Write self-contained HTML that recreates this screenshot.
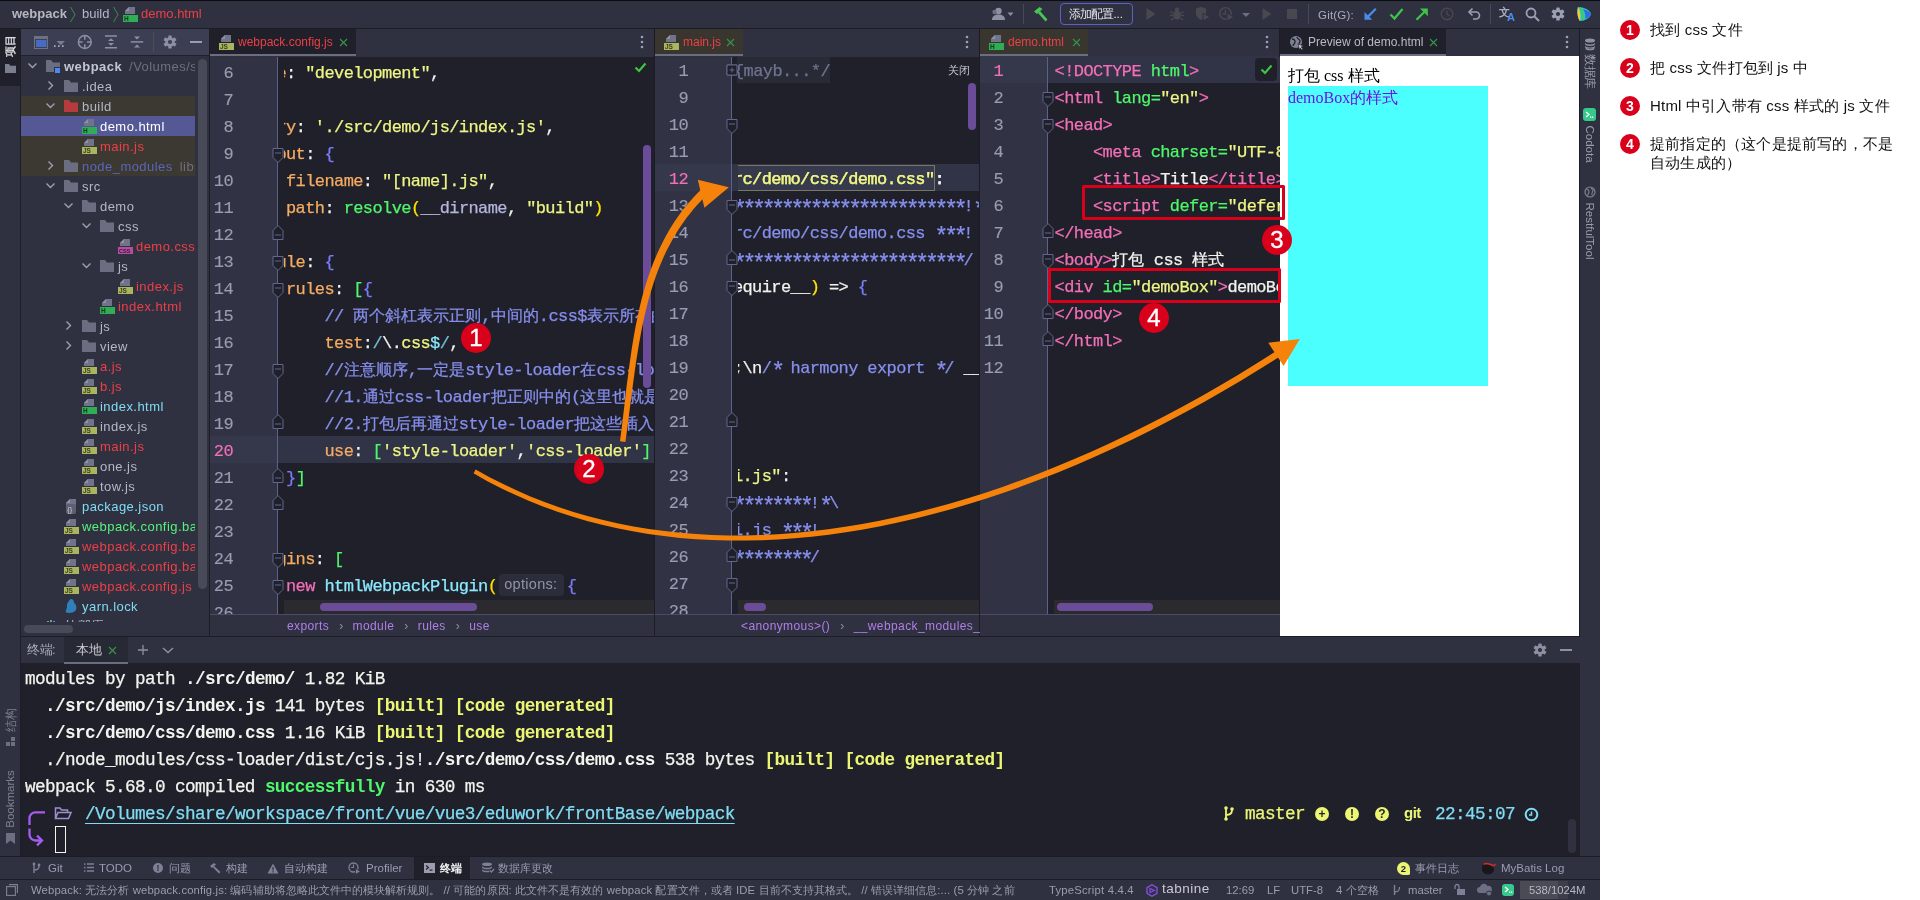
<!DOCTYPE html>
<html><head><meta charset="utf-8"><title>webpack</title>
<style>
*{box-sizing:border-box}
html,body{margin:0;padding:0}
body{width:1920px;height:900px;position:relative;overflow:hidden;background:#fff;font-family:"Liberation Sans",sans-serif;}
.a{position:absolute}
.mono{font-family:"Liberation Mono",monospace}
.code{-webkit-text-stroke:.25px currentColor;position:absolute;font-family:"Liberation Mono",monospace;font-size:17px;letter-spacing:-.6px;line-height:27px;height:27px;white-space:pre;color:#f2f2ee}
.ln{-webkit-text-stroke:.15px currentColor;position:absolute;font-family:"Liberation Mono",monospace;font-size:17px;letter-spacing:-.6px;line-height:27px;height:27px;text-align:right;color:#9a9cb1}
.tree{position:absolute;font-size:13px;letter-spacing:.45px;line-height:20px;height:20px;margin-top:1px;white-space:nowrap;color:#b4b7c7}
.ui{position:absolute;font-size:12px;line-height:16px;white-space:nowrap;color:#b4b7c7}
.term{position:absolute;font-family:"Liberation Mono",monospace;font-size:17.7px;letter-spacing:-.62px;line-height:27px;height:27px;white-space:pre;color:#f4f4ef;-webkit-text-stroke:.25px currentColor}
.clip{position:absolute;overflow:hidden}
.k{display:inline-block;line-height:0;text-align:center;white-space:nowrap;letter-spacing:0;vertical-align:baseline}
.st{font-size:23px;letter-spacing:-4.2px;position:relative;top:6.2px;line-height:0}
svg{position:absolute;overflow:visible}
</style></head><body><div id="root" style="position:absolute;left:0;top:0;width:1920px;height:900px;will-change:transform">

<div class="a" style="left:0px;top:0px;width:1600px;height:900px;background:#2f3140;"></div>
<div class="a" style="left:0px;top:0px;width:1600px;height:1px;background:#0c0c10;"></div>
<div class="a" style="left:0px;top:28px;width:1600px;height:1px;background:#1b1c24;"></div>
<div class="ui" style="left:12px;top:6px;font-size:13px;font-weight:bold;color:#b5b7be">webpack</div>
<svg class="a" style="left:69px;top:6px" width="8" height="17" viewBox="0 0 8 17"><path d="M1.5 1l4.5 7.5L1.5 16" fill="none" stroke="#3d7a4d" stroke-width="1.1"/></svg>
<div class="ui" style="left:82px;top:6px;font-size:13px;color:#b4b7c7">build</div>
<svg class="a" style="left:112px;top:6px" width="8" height="17" viewBox="0 0 8 17"><path d="M1.5 1l4.5 7.5L1.5 16" fill="none" stroke="#3d7a4d" stroke-width="1.1"/></svg>
<svg class="a" style="left:122px;top:6px" width="17" height="16" viewBox="0 0 17 16"><path d="M7 1h6v7H3V5z" fill="#70738a"/><path d="M7 1v4H3z" fill="#8f92a6"/><rect x="1" y="9" width="15" height="7" fill="#2fae55"/><text x="2" y="15.2" font-family="Liberation Sans" font-weight="bold" font-size="6.5" fill="#0c3a1a">H</text></svg>
<div class="ui" style="left:141px;top:6px;font-size:13px;color:#ee3f47">demo.html</div>
<svg class="a" style="left:990px;top:6px" width="28" height="16" viewBox="0 0 28 16"><circle cx="8.5" cy="5" r="3.2" fill="#8d90a3"/><path d="M2 14c0-4 3-5.5 6.5-5.5S15 10 15 14z" fill="#8d90a3"/><circle cx="4.5" cy="6" r="2.2" fill="#6d7083"/><path d="M17.5 6.5h6l-3 3.5z" fill="#8d90a3"/></svg>
<div class="a" style="left:1023px;top:4px;width:1px;height:20px;background:#45475a;"></div>
<svg class="a" style="left:1032px;top:5px" width="18" height="18" viewBox="0 0 18 18"><path d="M2 6.5L7.5 2l3 2-5.5 5z" fill="#47c653"/><path d="M8 6l7.5 8.5-2 2L6 8z" fill="#47c653"/></svg>
<div class="a" style="left:1060px;top:3px;width:73px;height:22px;border:1px solid #5c62c4;border-radius:4px;background:transparent"></div>
<div class="ui" style="left:1069px;top:6px;font-size:11.500px;color:#e4e4ea"><span class="k" style="width:11.1px;">添</span><span class="k" style="width:11.1px;">加</span><span class="k" style="width:11.1px;">配</span><span class="k" style="width:11.1px;">置</span>...</div>
<svg class="a" style="left:1145px;top:6px" width="12" height="16" viewBox="0 0 12 16"><path d="M1.5 2l9 6-9 6z" fill="#484950"/></svg>
<svg class="a" style="left:1169px;top:6px" width="16" height="16" viewBox="0 0 16 16"><ellipse cx="8" cy="9" rx="3.6" ry="4.6" fill="#484950"/><circle cx="8" cy="3.6" r="2.2" fill="#484950"/><path d="M1.5 5.5l3 2M14.5 5.5l-3 2M1 9.5h3.5M15 9.5h-3.5M2 14l3-2M14 14l-3-2" stroke="#484950" stroke-width="1.3"/></svg>
<svg class="a" style="left:1194px;top:6px" width="17" height="16" viewBox="0 0 17 16"><path d="M2 2.5l5-1.5 5 1.5v5c0 3-2.5 5.5-5 6.5C4.5 13 2 10.500 2 7.500z" fill="#484950"/><path d="M9 7l7 4-7 4z" fill="#484950" stroke="#2f3140" stroke-width="1"/></svg>
<svg class="a" style="left:1218px;top:6px" width="17" height="16" viewBox="0 0 17 16"><circle cx="7.5" cy="7.5" r="5.7" fill="none" stroke="#484950" stroke-width="1.6"/><path d="M7.500 4v4h-3" fill="none" stroke="#484950" stroke-width="1.4"/><path d="M9 7l7 4-7 4z" fill="#484950" stroke="#2f3140" stroke-width="1"/></svg>
<svg class="a" style="left:1241px;top:12px" width="10" height="6" viewBox="0 0 10 6"><path d="M1 1h8L5 5z" fill="#6d7083"/></svg>
<svg class="a" style="left:1261px;top:6px" width="12" height="16" viewBox="0 0 12 16"><path d="M1.5 2l9 6-9 6z" fill="#484950"/></svg>
<div class="a" style="left:1287px;top:9px;width:10px;height:10px;background:#484950;"></div>
<div class="a" style="left:1308px;top:4px;width:1px;height:20px;background:#45475a;"></div>
<div class="ui" style="left:1318px;top:7px;font-size:11.5px;color:#a9acbe;letter-spacing:.2px">Git(G):</div>
<svg class="a" style="left:1363px;top:7px" width="14" height="14" viewBox="0 0 14 14"><path d="M12.800 1.800L5 9.600" fill="none" stroke="#4a8bf0" stroke-width="2.200"/><path d="M1.500 12.800V5l7.800 7.800z" fill="#4a8bf0"/></svg>
<svg class="a" style="left:1389px;top:7px" width="15" height="14" viewBox="0 0 15 14"><path d="M1.500 7.500l4 4 8-9.500" fill="none" stroke="#3ec545" stroke-width="2.2"/></svg>
<svg class="a" style="left:1415px;top:7px" width="14" height="14" viewBox="0 0 14 14"><path d="M1.500 12.800L9.300 5" fill="none" stroke="#3ec545" stroke-width="2.200"/><path d="M12.800 1.500v7.800L5 1.500z" fill="#3ec545"/></svg>
<svg class="a" style="left:1440px;top:7px" width="14" height="14" viewBox="0 0 14 14"><circle cx="7" cy="7" r="5.800" fill="none" stroke="#484950" stroke-width="1.400"/><path d="M7 3.500V7l2.500 2" fill="none" stroke="#484950" stroke-width="1.300"/></svg>
<svg class="a" style="left:1467px;top:7px" width="14" height="14" viewBox="0 0 14 14"><path d="M2.500 5h6.500a3.500 3.500 0 0 1 0 7H6" fill="none" stroke="#9da0b3" stroke-width="1.600"/><path d="M5.500 1.500L2 5l3.500 3.500" fill="none" stroke="#9da0b3" stroke-width="1.600"/></svg>
<div class="a" style="left:1490px;top:4px;width:1px;height:20px;background:#45475a;"></div>
<div class="ui" style="left:1499px;top:4px;font-size:11px;color:#a9acbe;font-weight:bold"><span class="k" style="width:11px;">文</span></div>
<div class="ui" style="left:1507px;top:9px;font-size:11px;color:#4a8bf0;font-weight:bold">A</div>
<svg class="a" style="left:1525px;top:7px" width="15" height="15" viewBox="0 0 15 15"><circle cx="6" cy="6" r="4.500" fill="none" stroke="#9da0b3" stroke-width="1.800"/><path d="M9.500 9.500L14 14" stroke="#9da0b3" stroke-width="2"/></svg>
<svg class="a" style="left:1551px;top:7px" width="14" height="14" viewBox="-7 -7 14 14"><rect x="-1.700" y="-6.600" width="3.400" height="4" rx=".5" fill="#9da0b3" transform="rotate(0)"/><rect x="-1.700" y="-6.600" width="3.400" height="4" rx=".5" fill="#9da0b3" transform="rotate(60)"/><rect x="-1.700" y="-6.600" width="3.400" height="4" rx=".5" fill="#9da0b3" transform="rotate(120)"/><rect x="-1.700" y="-6.600" width="3.400" height="4" rx=".5" fill="#9da0b3" transform="rotate(180)"/><rect x="-1.700" y="-6.600" width="3.400" height="4" rx=".5" fill="#9da0b3" transform="rotate(240)"/><rect x="-1.700" y="-6.600" width="3.400" height="4" rx=".5" fill="#9da0b3" transform="rotate(300)"/><circle r="4.700" fill="#9da0b3"/><circle r="2.100" fill="#2f3140"/></svg>
<svg class="a" style="left:1576px;top:6px" width="16" height="16" viewBox="0 0 16 16"><path d="M2 1c6 0 12 3 13 7-1 4-6 7-11 7C1 11 1 5 2 1z" fill="#2dc5c4"/><path d="M2 1c2 3 3 7 2 14C1 11 1 5 2 1z" fill="#f7c83a"/><path d="M7 3c4 1 7 3 8 5-1 2-3 4-6 5 1-3 0-7-2-10z" fill="#2e6be6"/><path d="M4 2c3 3 4 8 3 12" fill="none" stroke="#3ecf5a" stroke-width="2"/></svg>
<div class="a" style="left:0px;top:29px;width:21px;height:57px;background:#1f2029;"></div>
<div class="ui" style="left:-7.700px;top:39px;width:36px;height:14px;font-size:11px;line-height:14px;color:#e6e6ea;transform:rotate(-90deg);text-align:center;-webkit-text-stroke:.3px #e6e6ea"><span class="k" style="width:11px;">项</span><span class="k" style="width:11px;">目</span></div>
<svg class="a" style="left:5px;top:64px" width="11" height="9" viewBox="0 0 11 9"><path d="M0 0h4l1.300 1.800H11V9H0z" fill="#7b7e8e"/></svg>
<div class="ui" style="left:-7px;top:713px;width:36px;height:14px;font-size:11.500px;line-height:14px;color:#7e8196;transform:rotate(-90deg);text-align:center"><span class="k" style="width:11.5px;">结</span><span class="k" style="width:11.5px;">构</span></div>
<svg class="a" style="left:6px;top:737px" width="10" height="10" viewBox="0 0 10 10"><rect x="5" y="0" width="4" height="4" fill="#6d7083"/><rect x="0" y="5" width="4" height="4" fill="#6d7083"/><rect x="5" y="5" width="4" height="4" fill="#6d7083"/></svg>
<div class="ui" style="left:-22px;top:792px;width:64px;height:14px;font-size:11.5px;line-height:14px;color:#7e8196;transform:rotate(-90deg);text-align:center">Bookmarks</div>
<svg class="a" style="left:6px;top:833px" width="9" height="11" viewBox="0 0 9 11"><path d="M0 0h9v11L4.500 7.500 0 11z" fill="#6d7083"/></svg>
<div class="a" style="left:20px;top:29px;width:1px;height:828px;background:#1d1e27;"></div>
<div class="a" style="left:21px;top:29px;width:188px;height:27px;background:#3c3f54;"></div>
<svg class="a" style="left:34px;top:36px" width="14" height="13" viewBox="0 0 14 13"><rect x=".5" y=".5" width="13" height="12" fill="#3c3f54" stroke="#6e7182" stroke-width="1"/><rect x="1" y="1" width="12" height="2" fill="#6e7182"/><rect x="2" y="4" width="10.500" height="7" fill="#466bc4"/></svg>
<svg class="a" style="left:53px;top:40px" width="13" height="8" viewBox="0 0 13 8"><rect x="1" y="5.300" width="1.600" height="1.600" fill="#b4b7c7"/><rect x="5" y="5.300" width="1.600" height="1.600" fill="#b4b7c7"/><rect x="9" y="5.300" width="1.600" height="1.600" fill="#b4b7c7"/><path d="M3.600 .9h8.400L7.800 5.300z" fill="#7a7d90"/></svg>
<svg class="a" style="left:77px;top:34px" width="16" height="16" viewBox="0 0 16 16"><circle cx="7.800" cy="8" r="6.400" fill="none" stroke="#8d90a3" stroke-width="1.500"/><path d="M7.800 1.500v4.300M7.800 10.200v4.300M1.300 8h4.300M10 8h4.300" stroke="#8d90a3" stroke-width="1.500"/></svg>
<svg class="a" style="left:104px;top:35px" width="14" height="14" viewBox="0 0 14 14"><path d="M1 1h12M1 12.800h12" stroke="#8d90a3" stroke-width="1.500"/><path d="M4 6L7 3.300 10 6zM4 8L7 10.700 10 8z" fill="#8d90a3"/></svg>
<svg class="a" style="left:130px;top:35px" width="14" height="14" viewBox="0 0 14 14"><path d="M.8 6.900h12.400" stroke="#8d90a3" stroke-width="1.500"/><path d="M4 1.500h6L7 4.500zM4 12.500h6L7 9.500z" fill="#8d90a3"/></svg>
<div class="a" style="left:153px;top:32px;width:1px;height:20px;background:#4f4e4b;"></div>
<svg class="a" style="left:163px;top:35px" width="14" height="14" viewBox="-7 -7 14 14"><rect x="-1.700" y="-6.600" width="3.400" height="4" rx=".5" fill="#8d90a3" transform="rotate(0)"/><rect x="-1.700" y="-6.600" width="3.400" height="4" rx=".5" fill="#8d90a3" transform="rotate(60)"/><rect x="-1.700" y="-6.600" width="3.400" height="4" rx=".5" fill="#8d90a3" transform="rotate(120)"/><rect x="-1.700" y="-6.600" width="3.400" height="4" rx=".5" fill="#8d90a3" transform="rotate(180)"/><rect x="-1.700" y="-6.600" width="3.400" height="4" rx=".5" fill="#8d90a3" transform="rotate(240)"/><rect x="-1.700" y="-6.600" width="3.400" height="4" rx=".5" fill="#8d90a3" transform="rotate(300)"/><circle r="4.700" fill="#8d90a3"/><circle r="2.100" fill="#3c3f54"/></svg>
<div class="a" style="left:190px;top:41px;width:12px;height:2px;background:#9a9db0;"></div>
<div class="a" style="left:21px;top:55px;width:188px;height:1px;background:#20212b;"></div>
<div class="a" style="left:21px;top:56px;width:188px;height:558px;background:#2f3140;"></div>
<div class="a" style="left:21px;top:96px;width:174px;height:20px;background:#3b3932;"></div>
<div class="a" style="left:21px;top:116px;width:174px;height:20px;background:#545996;"></div>
<div class="a" style="left:21px;top:136px;width:174px;height:40px;background:#3b3932;"></div>
<div class="a" style="left:198px;top:59px;width:9px;height:530px;border-radius:5px;background:#494a57"></div>
<div class="a" style="left:24px;top:625px;width:49px;height:8px;border-radius:4px;background:#494a57"></div>
<div class="clip" style="left:21px;top:56px;width:174px;height:565px">
<svg class="a" style="left:6px;top:4px" width="11" height="11" viewBox="0 0 11 11"><path d="M1.5 3.5l4 4 4-4" fill="none" stroke="#9da0b3" stroke-width="1.4"/></svg>
<svg class="a" style="left:24px;top:3px" width="16" height="14" viewBox="0 0 16 14"><path d="M1 1h5l2 2.5h7V13H1z" fill="#6b6e80"/></svg>
<div class="a" style="left:33px;top:11px;width:7px;height:7px;background:#4a8bf0;border:1px solid #2f3140"></div>
<div class="tree" style="left:43px;top:0px;color:#c2c5d4;font-weight:bold;">webpack<span style="color:#6c6f82;font-weight:normal;padding-left:7px">/Volumes/s</span></div>
<svg class="a" style="left:24px;top:24px" width="11" height="11" viewBox="0 0 11 11"><path d="M3.5 1.5l4 4-4 4" fill="none" stroke="#9da0b3" stroke-width="1.4"/></svg>
<svg class="a" style="left:42px;top:23px" width="16" height="14" viewBox="0 0 16 14"><path d="M1 1h5l2 2.5h7V13H1z" fill="#6b6e80"/></svg>
<div class="tree" style="left:61px;top:20px;color:#b4b7c7;">.idea</div>
<svg class="a" style="left:24px;top:44px" width="11" height="11" viewBox="0 0 11 11"><path d="M1.5 3.5l4 4 4-4" fill="none" stroke="#9da0b3" stroke-width="1.4"/></svg>
<svg class="a" style="left:42px;top:43px" width="16" height="14" viewBox="0 0 16 14"><path d="M1 1h5l2 2.5h7V13H1z" fill="#b53b3f"/></svg>
<div class="tree" style="left:61px;top:40px;color:#b4b7c7;">build</div>
<svg class="a" style="left:60px;top:62px" width="17" height="16" viewBox="0 0 17 16"><path d="M7 1h6v7H3V5z" fill="#70738a"/><path d="M7 1v4H3z" fill="#8f92a6"/><rect x="1" y="9" width="15" height="7" fill="#2fae55"/><text x="2" y="15.2" font-family="Liberation Sans" font-weight="bold" font-size="6.5" fill="#0c3a1a">H</text></svg>
<div class="tree" style="left:79px;top:60px;color:#ffffff;">demo.html</div>
<svg class="a" style="left:60px;top:82px" width="17" height="16" viewBox="0 0 17 16"><path d="M7 1h6v7H3V5z" fill="#70738a"/><path d="M7 1v4H3z" fill="#8f92a6"/><rect x="1" y="9" width="15" height="7" fill="#aab55f"/><text x="2" y="15.2" font-family="Liberation Sans" font-weight="bold" font-size="6.5" fill="#3a3e1c">JS</text></svg>
<div class="tree" style="left:79px;top:80px;color:#ee3f47;">main.js</div>
<svg class="a" style="left:24px;top:104px" width="11" height="11" viewBox="0 0 11 11"><path d="M3.5 1.5l4 4-4 4" fill="none" stroke="#9da0b3" stroke-width="1.4"/></svg>
<svg class="a" style="left:42px;top:103px" width="16" height="14" viewBox="0 0 16 14"><path d="M1 1h5l2 2.5h7V13H1z" fill="#6b6e80"/></svg>
<div class="tree" style="left:61px;top:100px;color:#5a66b8;">node_modules <span style="color:#6c6f82;padding-left:3px">libr</span></div>
<svg class="a" style="left:24px;top:124px" width="11" height="11" viewBox="0 0 11 11"><path d="M1.5 3.5l4 4 4-4" fill="none" stroke="#9da0b3" stroke-width="1.4"/></svg>
<svg class="a" style="left:42px;top:123px" width="16" height="14" viewBox="0 0 16 14"><path d="M1 1h5l2 2.5h7V13H1z" fill="#6b6e80"/></svg>
<div class="tree" style="left:61px;top:120px;color:#b4b7c7;">src</div>
<svg class="a" style="left:42px;top:144px" width="11" height="11" viewBox="0 0 11 11"><path d="M1.5 3.5l4 4 4-4" fill="none" stroke="#9da0b3" stroke-width="1.4"/></svg>
<svg class="a" style="left:60px;top:143px" width="16" height="14" viewBox="0 0 16 14"><path d="M1 1h5l2 2.5h7V13H1z" fill="#6b6e80"/></svg>
<div class="tree" style="left:79px;top:140px;color:#b4b7c7;">demo</div>
<svg class="a" style="left:60px;top:164px" width="11" height="11" viewBox="0 0 11 11"><path d="M1.5 3.5l4 4 4-4" fill="none" stroke="#9da0b3" stroke-width="1.4"/></svg>
<svg class="a" style="left:78px;top:163px" width="16" height="14" viewBox="0 0 16 14"><path d="M1 1h5l2 2.5h7V13H1z" fill="#6b6e80"/></svg>
<div class="tree" style="left:97px;top:160px;color:#b4b7c7;">css</div>
<svg class="a" style="left:96px;top:182px" width="17" height="16" viewBox="0 0 17 16"><path d="M7 1h6v7H3V5z" fill="#70738a"/><path d="M7 1v4H3z" fill="#8f92a6"/><rect x="1" y="9" width="15" height="7" fill="#b24fa0"/><text x="2" y="15.2" font-family="Liberation Sans" font-weight="bold" font-size="5.5" fill="#3d1236">CSS</text></svg>
<div class="tree" style="left:115px;top:180px;color:#ee3f47;">demo.css</div>
<svg class="a" style="left:60px;top:204px" width="11" height="11" viewBox="0 0 11 11"><path d="M1.5 3.5l4 4 4-4" fill="none" stroke="#9da0b3" stroke-width="1.4"/></svg>
<svg class="a" style="left:78px;top:203px" width="16" height="14" viewBox="0 0 16 14"><path d="M1 1h5l2 2.5h7V13H1z" fill="#6b6e80"/></svg>
<div class="tree" style="left:97px;top:200px;color:#b4b7c7;">js</div>
<svg class="a" style="left:96px;top:222px" width="17" height="16" viewBox="0 0 17 16"><path d="M7 1h6v7H3V5z" fill="#70738a"/><path d="M7 1v4H3z" fill="#8f92a6"/><rect x="1" y="9" width="15" height="7" fill="#aab55f"/><text x="2" y="15.2" font-family="Liberation Sans" font-weight="bold" font-size="6.5" fill="#3a3e1c">JS</text></svg>
<div class="tree" style="left:115px;top:220px;color:#ee3f47;">index.js</div>
<svg class="a" style="left:78px;top:242px" width="17" height="16" viewBox="0 0 17 16"><path d="M7 1h6v7H3V5z" fill="#70738a"/><path d="M7 1v4H3z" fill="#8f92a6"/><rect x="1" y="9" width="15" height="7" fill="#2fae55"/><text x="2" y="15.2" font-family="Liberation Sans" font-weight="bold" font-size="6.5" fill="#0c3a1a">H</text></svg>
<div class="tree" style="left:97px;top:240px;color:#ee3f47;">index.html</div>
<svg class="a" style="left:42px;top:264px" width="11" height="11" viewBox="0 0 11 11"><path d="M3.5 1.5l4 4-4 4" fill="none" stroke="#9da0b3" stroke-width="1.4"/></svg>
<svg class="a" style="left:60px;top:263px" width="16" height="14" viewBox="0 0 16 14"><path d="M1 1h5l2 2.5h7V13H1z" fill="#6b6e80"/></svg>
<div class="tree" style="left:79px;top:260px;color:#b4b7c7;">js</div>
<svg class="a" style="left:42px;top:284px" width="11" height="11" viewBox="0 0 11 11"><path d="M3.5 1.5l4 4-4 4" fill="none" stroke="#9da0b3" stroke-width="1.4"/></svg>
<svg class="a" style="left:60px;top:283px" width="16" height="14" viewBox="0 0 16 14"><path d="M1 1h5l2 2.5h7V13H1z" fill="#6b6e80"/></svg>
<div class="tree" style="left:79px;top:280px;color:#b4b7c7;">view</div>
<svg class="a" style="left:60px;top:302px" width="17" height="16" viewBox="0 0 17 16"><path d="M7 1h6v7H3V5z" fill="#70738a"/><path d="M7 1v4H3z" fill="#8f92a6"/><rect x="1" y="9" width="15" height="7" fill="#aab55f"/><text x="2" y="15.2" font-family="Liberation Sans" font-weight="bold" font-size="6.5" fill="#3a3e1c">JS</text></svg>
<div class="tree" style="left:79px;top:300px;color:#ee3f47;">a.js</div>
<svg class="a" style="left:60px;top:322px" width="17" height="16" viewBox="0 0 17 16"><path d="M7 1h6v7H3V5z" fill="#70738a"/><path d="M7 1v4H3z" fill="#8f92a6"/><rect x="1" y="9" width="15" height="7" fill="#aab55f"/><text x="2" y="15.2" font-family="Liberation Sans" font-weight="bold" font-size="6.5" fill="#3a3e1c">JS</text></svg>
<div class="tree" style="left:79px;top:320px;color:#ee3f47;">b.js</div>
<svg class="a" style="left:60px;top:342px" width="17" height="16" viewBox="0 0 17 16"><path d="M7 1h6v7H3V5z" fill="#70738a"/><path d="M7 1v4H3z" fill="#8f92a6"/><rect x="1" y="9" width="15" height="7" fill="#2fae55"/><text x="2" y="15.2" font-family="Liberation Sans" font-weight="bold" font-size="6.5" fill="#0c3a1a">H</text></svg>
<div class="tree" style="left:79px;top:340px;color:#7fdcf3;">index.html</div>
<svg class="a" style="left:60px;top:362px" width="17" height="16" viewBox="0 0 17 16"><path d="M7 1h6v7H3V5z" fill="#70738a"/><path d="M7 1v4H3z" fill="#8f92a6"/><rect x="1" y="9" width="15" height="7" fill="#aab55f"/><text x="2" y="15.2" font-family="Liberation Sans" font-weight="bold" font-size="6.5" fill="#3a3e1c">JS</text></svg>
<div class="tree" style="left:79px;top:360px;color:#b4b7c7;">index.js</div>
<svg class="a" style="left:60px;top:382px" width="17" height="16" viewBox="0 0 17 16"><path d="M7 1h6v7H3V5z" fill="#70738a"/><path d="M7 1v4H3z" fill="#8f92a6"/><rect x="1" y="9" width="15" height="7" fill="#aab55f"/><text x="2" y="15.2" font-family="Liberation Sans" font-weight="bold" font-size="6.5" fill="#3a3e1c">JS</text></svg>
<div class="tree" style="left:79px;top:380px;color:#ee3f47;">main.js</div>
<svg class="a" style="left:60px;top:402px" width="17" height="16" viewBox="0 0 17 16"><path d="M7 1h6v7H3V5z" fill="#70738a"/><path d="M7 1v4H3z" fill="#8f92a6"/><rect x="1" y="9" width="15" height="7" fill="#aab55f"/><text x="2" y="15.2" font-family="Liberation Sans" font-weight="bold" font-size="6.5" fill="#3a3e1c">JS</text></svg>
<div class="tree" style="left:79px;top:400px;color:#b4b7c7;">one.js</div>
<svg class="a" style="left:60px;top:422px" width="17" height="16" viewBox="0 0 17 16"><path d="M7 1h6v7H3V5z" fill="#70738a"/><path d="M7 1v4H3z" fill="#8f92a6"/><rect x="1" y="9" width="15" height="7" fill="#aab55f"/><text x="2" y="15.2" font-family="Liberation Sans" font-weight="bold" font-size="6.5" fill="#3a3e1c">JS</text></svg>
<div class="tree" style="left:79px;top:420px;color:#b4b7c7;">tow.js</div>
<svg class="a" style="left:42px;top:442px" width="17" height="16" viewBox="0 0 17 16"><path d="M7 1h6v7H3V5z" fill="#70738a"/><path d="M7 1v4H3z" fill="#8f92a6"/><rect x="3" y="6" width="10" height="10" rx="2" fill="#5d6072"/><text x="4.300" y="14" font-family="Liberation Sans" font-size="7.500" fill="#c9cad3">{}</text></svg>
<div class="tree" style="left:61px;top:440px;color:#7fdcf3;">package.json</div>
<svg class="a" style="left:42px;top:462px" width="17" height="16" viewBox="0 0 17 16"><path d="M7 1h6v7H3V5z" fill="#70738a"/><path d="M7 1v4H3z" fill="#8f92a6"/><rect x="1" y="9" width="15" height="7" fill="#aab55f"/><text x="2" y="15.2" font-family="Liberation Sans" font-weight="bold" font-size="6.5" fill="#3a3e1c">JS</text></svg>
<div class="tree" style="left:61px;top:460px;color:#56f27c;">webpack.config.ba</div>
<svg class="a" style="left:42px;top:482px" width="17" height="16" viewBox="0 0 17 16"><path d="M7 1h6v7H3V5z" fill="#70738a"/><path d="M7 1v4H3z" fill="#8f92a6"/><rect x="1" y="9" width="15" height="7" fill="#aab55f"/><text x="2" y="15.2" font-family="Liberation Sans" font-weight="bold" font-size="6.5" fill="#3a3e1c">JS</text></svg>
<div class="tree" style="left:61px;top:480px;color:#ee3f47;">webpack.config.ba</div>
<svg class="a" style="left:42px;top:502px" width="17" height="16" viewBox="0 0 17 16"><path d="M7 1h6v7H3V5z" fill="#70738a"/><path d="M7 1v4H3z" fill="#8f92a6"/><rect x="1" y="9" width="15" height="7" fill="#aab55f"/><text x="2" y="15.2" font-family="Liberation Sans" font-weight="bold" font-size="6.5" fill="#3a3e1c">JS</text></svg>
<div class="tree" style="left:61px;top:500px;color:#ee3f47;">webpack.config.ba</div>
<svg class="a" style="left:42px;top:522px" width="17" height="16" viewBox="0 0 17 16"><path d="M7 1h6v7H3V5z" fill="#70738a"/><path d="M7 1v4H3z" fill="#8f92a6"/><rect x="1" y="9" width="15" height="7" fill="#aab55f"/><text x="2" y="15.2" font-family="Liberation Sans" font-weight="bold" font-size="6.5" fill="#3a3e1c">JS</text></svg>
<div class="tree" style="left:61px;top:520px;color:#ee3f47;">webpack.config.js</div>
<svg class="a" style="left:43px;top:542px" width="14" height="16" viewBox="0 0 14 16"><path d="M7 1c2 0 3 2 3 4 2 1 3 4 2 7-1 2-4 3-7 3-3 0-4-1-3-3 1-2 1-3 1-5s1-3 2-4c0-1 1-2 2-2z" fill="#2f7fba"/></svg>
<div class="tree" style="left:61px;top:540px;color:#7fdcf3;">yarn.lock</div>
</div>
<div class="clip" style="left:21px;top:619.500px;width:174px;height:2px"><div class="tree" style="left:43px;top:-5px;color:#b4b7c7"><span class="k" style="width:13.45px;">外</span><span class="k" style="width:13.45px;">部</span><span class="k" style="width:13.45px;">库</span></div><svg class="a" style="left:24px;top:0" width="12" height="8"><rect x="2" y="1" width="2" height="7" fill="#3ec545"/><rect x="5" y="0" width="2" height="8" fill="#8d90a3"/><rect x="8" y="1" width="2" height="7" fill="#4a8bf0"/></svg></div>
<div class="a" style="left:21px;top:636px;width:1579px;height:1px;background:#1b1c24;"></div>
<div class="a" style="left:210px;top:57px;width:444px;height:557px;background:#1f2029;"></div>
<div class="a" style="left:210px;top:57px;width:67px;height:557px;background:#313244;"></div>
<div class="a" style="left:210px;top:436px;width:67px;height:27px;background:#35374b;"></div>
<div class="a" style="left:277px;top:436px;width:377px;height:27px;background:#313346;"></div>
<div class="a" style="left:277px;top:57px;width:1.2px;height:557px;background:#5d618c;"></div>
<div class="clip" style="left:210px;top:57px;width:67px;height:557px">
<div class="ln" style="left:0;width:23px;top:3px;color:#9a9cb1">6</div>
<div class="ln" style="left:0;width:23px;top:30px;color:#9a9cb1">7</div>
<div class="ln" style="left:0;width:23px;top:57px;color:#9a9cb1">8</div>
<div class="ln" style="left:0;width:23px;top:84px;color:#9a9cb1">9</div>
<div class="ln" style="left:0;width:23px;top:111px;color:#9a9cb1">10</div>
<div class="ln" style="left:0;width:23px;top:138px;color:#9a9cb1">11</div>
<div class="ln" style="left:0;width:23px;top:165px;color:#9a9cb1">12</div>
<div class="ln" style="left:0;width:23px;top:192px;color:#9a9cb1">13</div>
<div class="ln" style="left:0;width:23px;top:219px;color:#9a9cb1">14</div>
<div class="ln" style="left:0;width:23px;top:246px;color:#9a9cb1">15</div>
<div class="ln" style="left:0;width:23px;top:273px;color:#9a9cb1">16</div>
<div class="ln" style="left:0;width:23px;top:300px;color:#9a9cb1">17</div>
<div class="ln" style="left:0;width:23px;top:327px;color:#9a9cb1">18</div>
<div class="ln" style="left:0;width:23px;top:354px;color:#9a9cb1">19</div>
<div class="ln" style="left:0;width:23px;top:381px;color:#f46fb8">20</div>
<div class="ln" style="left:0;width:23px;top:408px;color:#9a9cb1">21</div>
<div class="ln" style="left:0;width:23px;top:435px;color:#9a9cb1">22</div>
<div class="ln" style="left:0;width:23px;top:462px;color:#9a9cb1">23</div>
<div class="ln" style="left:0;width:23px;top:489px;color:#9a9cb1">24</div>
<div class="ln" style="left:0;width:23px;top:516px;color:#9a9cb1">25</div>
<div class="ln" style="left:0;width:23px;top:543px;color:#9a9cb1">26</div>
</div>
<div class="clip" style="left:283.5px;top:57px;width:370.5px;height:557px">
<div class="code" style="left:-74.30000000000001px;top:3px"><span style="color:#f5ac62">    mode</span><span style="color:#f2f2ee">: </span><span style="color:#eef583">"development"</span><span style="color:#f2f2ee">,</span></div>
<div class="code" style="left:-74.30000000000001px;top:57px"><span style="color:#f5ac62">    entry</span><span style="color:#f2f2ee">: </span><span style="color:#eef583">'./src/demo/js/index.js'</span><span style="color:#f2f2ee">,</span></div>
<div class="code" style="left:-74.30000000000001px;top:84px"><span style="color:#f5ac62">    output</span><span style="color:#f2f2ee">: </span><span style="color:#7b7cf7">{</span></div>
<div class="code" style="left:-74.30000000000001px;top:111px"><span style="color:#f5ac62">        filename</span><span style="color:#f2f2ee">: </span><span style="color:#eef583">"[name].js"</span><span style="color:#f2f2ee">,</span></div>
<div class="code" style="left:-74.30000000000001px;top:138px"><span style="color:#f5ac62">        path</span><span style="color:#f2f2ee">: </span><span style="color:#4ef76c">resolve</span><span style="color:#ffe100">(</span><span style="color:#b4b6dc">__dirname</span><span style="color:#f2f2ee">, </span><span style="color:#eef583">"build"</span><span style="color:#ffe100">)</span></div>
<div class="code" style="left:-74.30000000000001px;top:165px"><span style="color:#7b7cf7">    }</span><span style="color:#f2f2ee">,</span></div>
<div class="code" style="left:-74.30000000000001px;top:192px"><span style="color:#f5ac62">    module</span><span style="color:#f2f2ee">: </span><span style="color:#7b7cf7">{</span></div>
<div class="code" style="left:-74.30000000000001px;top:219px"><span style="color:#f5ac62">        rules</span><span style="color:#f2f2ee">: </span><span style="color:#4ef76c">[</span><span style="color:#7b7cf7">{</span></div>
<div class="code" style="left:-74.30000000000001px;top:246px"><span style="color:#878fee">            // <span class="k" style="width:16px;font-size:16px;">两</span><span class="k" style="width:16px;font-size:16px;">个</span><span class="k" style="width:16px;font-size:16px;">斜</span><span class="k" style="width:16px;font-size:16px;">杠</span><span class="k" style="width:16px;font-size:16px;">表</span><span class="k" style="width:16px;font-size:16px;">示</span><span class="k" style="width:16px;font-size:16px;">正</span><span class="k" style="width:16px;font-size:16px;">则</span>,<span class="k" style="width:16px;font-size:16px;">中</span><span class="k" style="width:16px;font-size:16px;">间</span><span class="k" style="width:16px;font-size:16px;">的</span>.css$<span class="k" style="width:16px;font-size:16px;">表</span><span class="k" style="width:16px;font-size:16px;">示</span><span class="k" style="width:16px;font-size:16px;">所</span><span class="k" style="width:16px;font-size:16px;">有</span><span class="k" style="width:16px;font-size:16px;">的</span>css<span class="k" style="width:16px;font-size:16px;">文</span><span class="k" style="width:16px;font-size:16px;">件</span></span></div>
<div class="code" style="left:-74.30000000000001px;top:273px"><span style="color:#f5ac62">            test</span><span style="color:#f2f2ee">:</span><span style="color:#73bcd6">/</span><span style="color:#f2f2ee">\.</span><span style="color:#eef583">css</span><span style="color:#8be9fd">$</span><span style="color:#73bcd6">/</span><span style="color:#f2f2ee">,</span></div>
<div class="code" style="left:-74.30000000000001px;top:300px"><span style="color:#878fee">            //<span class="k" style="width:16px;font-size:16px;">注</span><span class="k" style="width:16px;font-size:16px;">意</span><span class="k" style="width:16px;font-size:16px;">顺</span><span class="k" style="width:16px;font-size:16px;">序</span>,<span class="k" style="width:16px;font-size:16px;">一</span><span class="k" style="width:16px;font-size:16px;">定</span><span class="k" style="width:16px;font-size:16px;">是</span>style-loader<span class="k" style="width:16px;font-size:16px;">在</span>css-loader<span class="k" style="width:16px;font-size:16px;">前</span><span class="k" style="width:16px;font-size:16px;">面</span></span></div>
<div class="code" style="left:-74.30000000000001px;top:327px"><span style="color:#878fee">            //1.<span class="k" style="width:16px;font-size:16px;">通</span><span class="k" style="width:16px;font-size:16px;">过</span>css-loader<span class="k" style="width:16px;font-size:16px;">把</span><span class="k" style="width:16px;font-size:16px;">正</span><span class="k" style="width:16px;font-size:16px;">则</span><span class="k" style="width:16px;font-size:16px;">中</span><span class="k" style="width:16px;font-size:16px;">的</span>(<span class="k" style="width:16px;font-size:16px;">这</span><span class="k" style="width:16px;font-size:16px;">里</span><span class="k" style="width:16px;font-size:16px;">也</span><span class="k" style="width:16px;font-size:16px;">就</span><span class="k" style="width:16px;font-size:16px;">是</span><span class="k" style="width:16px;font-size:16px;">所</span><span class="k" style="width:16px;font-size:16px;">有</span>css<span class="k" style="width:16px;font-size:16px;">文</span><span class="k" style="width:16px;font-size:16px;">件</span>)</span></div>
<div class="code" style="left:-74.30000000000001px;top:354px"><span style="color:#878fee">            //2.<span class="k" style="width:16px;font-size:16px;">打</span><span class="k" style="width:16px;font-size:16px;">包</span><span class="k" style="width:16px;font-size:16px;">后</span><span class="k" style="width:16px;font-size:16px;">再</span><span class="k" style="width:16px;font-size:16px;">通</span><span class="k" style="width:16px;font-size:16px;">过</span>style-loader<span class="k" style="width:16px;font-size:16px;">把</span><span class="k" style="width:16px;font-size:16px;">这</span><span class="k" style="width:16px;font-size:16px;">些</span><span class="k" style="width:16px;font-size:16px;">插</span><span class="k" style="width:16px;font-size:16px;">入</span><span class="k" style="width:16px;font-size:16px;">到</span><span class="k" style="width:16px;font-size:16px;">页</span><span class="k" style="width:16px;font-size:16px;">面</span><span class="k" style="width:16px;font-size:16px;">中</span></span></div>
<div class="code" style="left:-74.30000000000001px;top:381px"><span style="color:#f5ac62">            use</span><span style="color:#f2f2ee">: </span><span style="color:#4ef76c">[</span><span style="color:#eef583">'style-loader'</span><span style="color:#f2f2ee">,</span><span style="color:#eef583">'css-loader'</span><span style="color:#4ef76c">]</span></div>
<div class="code" style="left:-74.30000000000001px;top:408px"><span style="color:#7b7cf7">        }</span><span style="color:#4ef76c">]</span></div>
<div class="code" style="left:-74.30000000000001px;top:435px"><span style="color:#7b7cf7">    }</span><span style="color:#f2f2ee">,</span></div>
<div class="code" style="left:-74.30000000000001px;top:489px"><span style="color:#f5ac62">    plugins</span><span style="color:#f2f2ee">: </span><span style="color:#4ef76c">[</span></div>
<div class="code" style="left:-74.30000000000001px;top:516px"><span style="color:#f46fb8">        new </span><span style="color:#8be9fd">htmlWebpackPlugin</span><span style="color:#ffe100">(</span></div>
<div class="code" style="left:-74.30000000000001px;top:543px"><span style="color:#f5ac62">            template</span><span style="color:#f2f2ee">: </span><span style="color:#eef583">"./src/index.html"</span></div>
</div>
<svg class="a" style="left:277.5px;top:153px" width="1" height="1"><path d="M-5 -4.500h10v9L0 9.500l-5-5z" fill="#1f2029" stroke="#62668f" stroke-width="1"/><path d="M-3 0h6" stroke="#62668f" stroke-width="1" fill="none"/></svg>
<svg class="a" style="left:277.5px;top:234px" width="1" height="1"><path d="M-5 5.500h10v-9L0 -8.500l-5 5z" fill="#1f2029" stroke="#62668f" stroke-width="1"/><path d="M-3 1h6" stroke="#62668f" stroke-width="1" fill="none"/></svg>
<svg class="a" style="left:277.5px;top:261px" width="1" height="1"><path d="M-5 -4.500h10v9L0 9.500l-5-5z" fill="#1f2029" stroke="#62668f" stroke-width="1"/><path d="M-3 0h6" stroke="#62668f" stroke-width="1" fill="none"/></svg>
<svg class="a" style="left:277.5px;top:288px" width="1" height="1"><path d="M-5 -4.500h10v9L0 9.500l-5-5z" fill="#1f2029" stroke="#62668f" stroke-width="1"/><path d="M-3 0h6" stroke="#62668f" stroke-width="1" fill="none"/></svg>
<svg class="a" style="left:277.5px;top:369px" width="1" height="1"><path d="M-5 -4.500h10v9L0 9.500l-5-5z" fill="#1f2029" stroke="#62668f" stroke-width="1"/><path d="M-3 0h6" stroke="#62668f" stroke-width="1" fill="none"/></svg>
<svg class="a" style="left:277.5px;top:423px" width="1" height="1"><path d="M-5 5.500h10v-9L0 -8.500l-5 5z" fill="#1f2029" stroke="#62668f" stroke-width="1"/><path d="M-3 1h6" stroke="#62668f" stroke-width="1" fill="none"/></svg>
<svg class="a" style="left:277.5px;top:477px" width="1" height="1"><path d="M-5 5.500h10v-9L0 -8.500l-5 5z" fill="#1f2029" stroke="#62668f" stroke-width="1"/><path d="M-3 1h6" stroke="#62668f" stroke-width="1" fill="none"/></svg>
<svg class="a" style="left:277.5px;top:504px" width="1" height="1"><path d="M-5 5.500h10v-9L0 -8.500l-5 5z" fill="#1f2029" stroke="#62668f" stroke-width="1"/><path d="M-3 1h6" stroke="#62668f" stroke-width="1" fill="none"/></svg>
<svg class="a" style="left:277.5px;top:558px" width="1" height="1"><path d="M-5 -4.500h10v9L0 9.500l-5-5z" fill="#1f2029" stroke="#62668f" stroke-width="1"/><path d="M-3 0h6" stroke="#62668f" stroke-width="1" fill="none"/></svg>
<svg class="a" style="left:277.5px;top:585px" width="1" height="1"><path d="M-5 -4.500h10v9L0 9.500l-5-5z" fill="#1f2029" stroke="#62668f" stroke-width="1"/><path d="M-3 0h6" stroke="#62668f" stroke-width="1" fill="none"/></svg>
<div class="a" style="left:499.2px;top:574px;width:65px;height:22px;border-radius:4px;background:#2b2d3a"></div>
<div class="ui" style="left:504.2px;top:576px;font-size:14.500px;letter-spacing:.3px;color:#9194a8">options:</div>
<div class="code" style="left:566.7px;top:573px;color:#7b7cf7">{</div>
<svg class="a" style="left:634px;top:62px" width="13" height="11" viewBox="0 0 13 11"><path d="M1.500 5.500l3.500 3.500 6.500-7.500" fill="none" stroke="#3ec545" stroke-width="2.200"/></svg>
<div class="a" style="left:643px;top:145px;width:8px;height:243px;border-radius:4px;background:#6b4c99"></div>
<div class="a" style="left:283.5px;top:600px;width:370.5px;height:14px;background:#2b2b2f;"></div>
<div class="a" style="left:320px;top:603px;width:157px;height:8px;border-radius:4px;background:#6b4c99"></div>
<div class="a" style="left:655px;top:57px;width:324px;height:557px;background:#1f2029;"></div>
<div class="a" style="left:655px;top:57px;width:76px;height:557px;background:#313244;"></div>
<div class="a" style="left:655px;top:164px;width:76px;height:27px;background:#35374b;"></div>
<div class="a" style="left:731px;top:164px;width:248px;height:27px;background:#313346;"></div>
<div class="a" style="left:731px;top:57px;width:1.2px;height:557px;background:#5d618c;"></div>
<div class="clip" style="left:655px;top:57px;width:76px;height:557px">
<div class="ln" style="left:0;width:33px;top:1px;color:#9a9cb1">1</div>
<div class="ln" style="left:0;width:33px;top:28px;color:#9a9cb1">9</div>
<div class="ln" style="left:0;width:33px;top:55px;color:#9a9cb1">10</div>
<div class="ln" style="left:0;width:33px;top:82px;color:#9a9cb1">11</div>
<div class="ln" style="left:0;width:33px;top:109px;color:#f46fb8">12</div>
<div class="ln" style="left:0;width:33px;top:136px;color:#9a9cb1">13</div>
<div class="ln" style="left:0;width:33px;top:163px;color:#9a9cb1">14</div>
<div class="ln" style="left:0;width:33px;top:190px;color:#9a9cb1">15</div>
<div class="ln" style="left:0;width:33px;top:217px;color:#9a9cb1">16</div>
<div class="ln" style="left:0;width:33px;top:244px;color:#9a9cb1">17</div>
<div class="ln" style="left:0;width:33px;top:271px;color:#9a9cb1">18</div>
<div class="ln" style="left:0;width:33px;top:298px;color:#9a9cb1">19</div>
<div class="ln" style="left:0;width:33px;top:325px;color:#9a9cb1">20</div>
<div class="ln" style="left:0;width:33px;top:352px;color:#9a9cb1">21</div>
<div class="ln" style="left:0;width:33px;top:379px;color:#9a9cb1">22</div>
<div class="ln" style="left:0;width:33px;top:406px;color:#9a9cb1">23</div>
<div class="ln" style="left:0;width:33px;top:433px;color:#9a9cb1">24</div>
<div class="ln" style="left:0;width:33px;top:460px;color:#9a9cb1">25</div>
<div class="ln" style="left:0;width:33px;top:487px;color:#9a9cb1">26</div>
<div class="ln" style="left:0;width:33px;top:514px;color:#9a9cb1">27</div>
<div class="ln" style="left:0;width:33px;top:541px;color:#9a9cb1">28</div>
</div>
<div class="clip" style="left:738px;top:57px;width:241px;height:557px">
<div class="code" style="left:-5.100000000000023px;top:109px"><span style="color:#eef583">rc/demo/css/demo.css"</span><span style="color:#f2f2ee">:</span></div>
<div class="code" style="left:-5.100000000000023px;top:136px"><span style="color:#878fee"><span class="st">************************</span>!<span class="st">*</span>\</span></div>
<div class="code" style="left:-5.100000000000023px;top:163px"><span style="color:#878fee">rc/demo/css/demo.css <span class="st">***</span>!</span></div>
<div class="code" style="left:-5.100000000000023px;top:190px"><span style="color:#878fee"><span class="st">************************</span>/</span></div>
<div class="code" style="left:-5.100000000000023px;top:217px"><span style="color:#f2f2ee">equire__</span><span style="color:#ffe100">)</span><span style="color:#f2f2ee"> =&gt; </span><span style="color:#7b7cf7">{</span></div>
<div class="code" style="left:-5.100000000000023px;top:298px"><span style="color:#f2f2ee">;\n</span><span style="color:#878fee">/<span class="st">*</span> harmony export <span class="st">*</span>/</span><span style="color:#f2f2ee"> __webpack_</span></div>
<div class="code" style="left:-5.100000000000023px;top:406px"><span style="color:#eef583">i.js"</span><span style="color:#f2f2ee">:</span></div>
<div class="code" style="left:-5.100000000000023px;top:433px"><span style="color:#878fee"><span class="st">********</span>!<span class="st">*</span>\</span></div>
<div class="code" style="left:-5.100000000000023px;top:460px"><span style="color:#878fee">i.js <span class="st">***</span>!</span></div>
<div class="code" style="left:-5.100000000000023px;top:487px"><span style="color:#878fee"><span class="st">********</span>/</span></div>
</div>
<svg class="a" style="left:731.5px;top:70px" width="1" height="1"><path d="M-5 -5h10v10h-10z" fill="#1f2029" stroke="#62668f" stroke-width="1"/><path d="M-2.500 0h5M0 -2.500v5" stroke="#62668f" stroke-width="1" fill="none"/></svg>
<svg class="a" style="left:731.5px;top:124px" width="1" height="1"><path d="M-5 -4.500h10v9L0 9.500l-5-5z" fill="#1f2029" stroke="#62668f" stroke-width="1"/><path d="M-3 0h6" stroke="#62668f" stroke-width="1" fill="none"/></svg>
<svg class="a" style="left:731.5px;top:205px" width="1" height="1"><path d="M-5 -4.500h10v9L0 9.500l-5-5z" fill="#1f2029" stroke="#62668f" stroke-width="1"/><path d="M-3 0h6" stroke="#62668f" stroke-width="1" fill="none"/></svg>
<svg class="a" style="left:731.5px;top:259px" width="1" height="1"><path d="M-5 5.500h10v-9L0 -8.500l-5 5z" fill="#1f2029" stroke="#62668f" stroke-width="1"/><path d="M-3 1h6" stroke="#62668f" stroke-width="1" fill="none"/></svg>
<svg class="a" style="left:731.5px;top:286px" width="1" height="1"><path d="M-5 -4.500h10v9L0 9.500l-5-5z" fill="#1f2029" stroke="#62668f" stroke-width="1"/><path d="M-3 0h6" stroke="#62668f" stroke-width="1" fill="none"/></svg>
<svg class="a" style="left:731.5px;top:421px" width="1" height="1"><path d="M-5 5.500h10v-9L0 -8.500l-5 5z" fill="#1f2029" stroke="#62668f" stroke-width="1"/><path d="M-3 1h6" stroke="#62668f" stroke-width="1" fill="none"/></svg>
<svg class="a" style="left:731.5px;top:502px" width="1" height="1"><path d="M-5 -4.500h10v9L0 9.500l-5-5z" fill="#1f2029" stroke="#62668f" stroke-width="1"/><path d="M-3 0h6" stroke="#62668f" stroke-width="1" fill="none"/></svg>
<svg class="a" style="left:731.5px;top:556px" width="1" height="1"><path d="M-5 5.500h10v-9L0 -8.500l-5 5z" fill="#1f2029" stroke="#62668f" stroke-width="1"/><path d="M-3 1h6" stroke="#62668f" stroke-width="1" fill="none"/></svg>
<svg class="a" style="left:731.5px;top:583px" width="1" height="1"><path d="M-5 -4.500h10v9L0 9.500l-5-5z" fill="#1f2029" stroke="#62668f" stroke-width="1"/><path d="M-3 0h6" stroke="#62668f" stroke-width="1" fill="none"/></svg>
<div class="a" style="left:737px;top:57px;width:93px;height:26px;background:#282a36"></div>
<div class="code" style="left:734px;top:58px;color:#6f7390">{mayb...*/</div>
<svg class="a" style="left:731.5px;top:70px" width="1" height="1"><path d="M-5 -5h10v10h-10z" fill="#1f2029" stroke="#62668f" stroke-width="1"/><path d="M-2.500 0h5M0 -2.500v5" stroke="#62668f" stroke-width="1" fill="none"/></svg>
<div class="a" style="left:738px;top:164.500px;width:197px;height:26.500px;border:1px solid #7a7565;border-left:none;background:rgba(70,72,92,.35)"></div>
<div class="clip" style="left:738px;top:164px;width:241px;height:27px"><div class="code" style="left:-5.100000000000023px;top:2px"><span style="color:#eef583">rc/demo/css/demo.css"</span><span style="color:#f2f2ee">:</span></div></div>
<div class="ui" style="left:948px;top:62px;font-size:11px;color:#c9cad3"><span class="k" style="width:11px;">关</span><span class="k" style="width:11px;">闭</span></div>
<div class="a" style="left:968px;top:83px;width:8px;height:47px;border-radius:4px;background:#6b4c99"></div>
<div class="a" style="left:737.5px;top:600px;width:241.5px;height:14px;background:#2b2b2f;"></div>
<div class="a" style="left:743.500px;top:603px;width:22px;height:8px;border-radius:4px;background:#6b4c99"></div>
<div class="a" style="left:980px;top:57px;width:300px;height:557px;background:#1f2029;"></div>
<div class="a" style="left:980px;top:57px;width:67px;height:557px;background:#313244;"></div>
<div class="a" style="left:980px;top:56px;width:67px;height:27px;background:#35374b;"></div>
<div class="a" style="left:1047px;top:56px;width:233px;height:27px;background:#313346;"></div>
<div class="a" style="left:1047px;top:57px;width:1.2px;height:557px;background:#5d618c;"></div>
<div class="clip" style="left:980px;top:57px;width:67px;height:557px">
<div class="ln" style="left:0;width:23px;top:1px;color:#f46fb8">1</div>
<div class="ln" style="left:0;width:23px;top:28px;color:#9a9cb1">2</div>
<div class="ln" style="left:0;width:23px;top:55px;color:#9a9cb1">3</div>
<div class="ln" style="left:0;width:23px;top:82px;color:#9a9cb1">4</div>
<div class="ln" style="left:0;width:23px;top:109px;color:#9a9cb1">5</div>
<div class="ln" style="left:0;width:23px;top:136px;color:#9a9cb1">6</div>
<div class="ln" style="left:0;width:23px;top:163px;color:#9a9cb1">7</div>
<div class="ln" style="left:0;width:23px;top:190px;color:#9a9cb1">8</div>
<div class="ln" style="left:0;width:23px;top:217px;color:#9a9cb1">9</div>
<div class="ln" style="left:0;width:23px;top:244px;color:#9a9cb1">10</div>
<div class="ln" style="left:0;width:23px;top:271px;color:#9a9cb1">11</div>
<div class="ln" style="left:0;width:23px;top:298px;color:#9a9cb1">12</div>
</div>
<div class="clip" style="left:1053.5px;top:57px;width:226.5px;height:557px">
<div class="code" style="left:1.099999999999909px;top:1px"><span style="color:#f46fb8">&lt;!DOCTYPE </span><span style="color:#4ef76c">html</span><span style="color:#f46fb8">&gt;</span></div>
<div class="code" style="left:1.099999999999909px;top:28px"><span style="color:#f46fb8">&lt;html </span><span style="color:#4ef76c">lang=</span><span style="color:#eef583">"en"</span><span style="color:#f46fb8">&gt;</span></div>
<div class="code" style="left:1.099999999999909px;top:55px"><span style="color:#f46fb8">&lt;head&gt;</span></div>
<div class="code" style="left:1.099999999999909px;top:82px"><span style="color:#f46fb8">    &lt;meta </span><span style="color:#4ef76c">charset=</span><span style="color:#eef583">"UTF-8"</span><span style="color:#f46fb8">&gt;</span></div>
<div class="code" style="left:1.099999999999909px;top:109px"><span style="color:#f46fb8">    &lt;title&gt;</span><span style="color:#f2f2ee">Title</span><span style="color:#f46fb8">&lt;/title&gt;</span></div>
<div class="code" style="left:1.099999999999909px;top:136px"><span style="color:#f46fb8">    &lt;script </span><span style="color:#4ef76c">defer=</span><span style="color:#eef583">"defer"</span><span style="color:#4ef76c"> src=</span><span style="color:#eef583">"main.js"</span><span style="color:#f46fb8">&gt;</span></div>
<div class="code" style="left:1.099999999999909px;top:163px"><span style="color:#f46fb8">&lt;/head&gt;</span></div>
<div class="code" style="left:1.099999999999909px;top:190px"><span style="color:#f46fb8">&lt;body&gt;</span><span style="color:#f2f2ee"><span class="k" style="width:16px;font-size:16px;">打</span><span class="k" style="width:16px;font-size:16px;">包</span> css <span class="k" style="width:16px;font-size:16px;">样</span><span class="k" style="width:16px;font-size:16px;">式</span></span></div>
<div class="code" style="left:1.099999999999909px;top:217px"><span style="color:#f46fb8">&lt;div </span><span style="color:#4ef76c">id=</span><span style="color:#eef583">"demoBox"</span><span style="color:#f46fb8">&gt;</span><span style="color:#f2f2ee">demoBox<span class="k" style="width:16px;font-size:16px;">的</span><span class="k" style="width:16px;font-size:16px;">样</span><span class="k" style="width:16px;font-size:16px;">式</span></span><span style="color:#f46fb8">&lt;/div&gt;</span></div>
<div class="code" style="left:1.099999999999909px;top:244px"><span style="color:#f46fb8">&lt;/body&gt;</span></div>
<div class="code" style="left:1.099999999999909px;top:271px"><span style="color:#f46fb8">&lt;/html&gt;</span></div>
</div>
<svg class="a" style="left:1047.5px;top:97px" width="1" height="1"><path d="M-5 -4.500h10v9L0 9.500l-5-5z" fill="#1f2029" stroke="#62668f" stroke-width="1"/><path d="M-3 0h6" stroke="#62668f" stroke-width="1" fill="none"/></svg>
<svg class="a" style="left:1047.5px;top:124px" width="1" height="1"><path d="M-5 -4.500h10v9L0 9.500l-5-5z" fill="#1f2029" stroke="#62668f" stroke-width="1"/><path d="M-3 0h6" stroke="#62668f" stroke-width="1" fill="none"/></svg>
<svg class="a" style="left:1047.5px;top:232px" width="1" height="1"><path d="M-5 5.500h10v-9L0 -8.500l-5 5z" fill="#1f2029" stroke="#62668f" stroke-width="1"/><path d="M-3 1h6" stroke="#62668f" stroke-width="1" fill="none"/></svg>
<svg class="a" style="left:1047.5px;top:259px" width="1" height="1"><path d="M-5 -4.500h10v9L0 9.500l-5-5z" fill="#1f2029" stroke="#62668f" stroke-width="1"/><path d="M-3 0h6" stroke="#62668f" stroke-width="1" fill="none"/></svg>
<svg class="a" style="left:1047.5px;top:313px" width="1" height="1"><path d="M-5 5.500h10v-9L0 -8.500l-5 5z" fill="#1f2029" stroke="#62668f" stroke-width="1"/><path d="M-3 1h6" stroke="#62668f" stroke-width="1" fill="none"/></svg>
<svg class="a" style="left:1047.5px;top:340px" width="1" height="1"><path d="M-5 5.500h10v-9L0 -8.500l-5 5z" fill="#1f2029" stroke="#62668f" stroke-width="1"/><path d="M-3 1h6" stroke="#62668f" stroke-width="1" fill="none"/></svg>
<div class="a" style="left:1255px;top:58px;width:22px;height:23px;border-radius:4px;background:#1f2029"></div>
<svg class="a" style="left:1260px;top:64px" width="13" height="11" viewBox="0 0 13 11"><path d="M1.500 5.500l3.500 3.500 6.500-7.500" fill="none" stroke="#3ec545" stroke-width="2.200"/></svg>
<div class="a" style="left:1053.5px;top:600px;width:226.5px;height:14px;background:#2b2b2f;"></div>
<div class="a" style="left:1057px;top:603px;width:96px;height:8px;border-radius:4px;background:#6b4c99"></div>
<div class="a" style="left:654px;top:29px;width:1px;height:607px;background:#1b1c24;"></div>
<div class="a" style="left:979px;top:29px;width:1px;height:607px;background:#1b1c24;"></div>
<div class="a" style="left:209px;top:29px;width:1px;height:607px;background:#1b1c24;"></div>
<div class="a" style="left:210px;top:614px;width:1070px;height:22px;background:#2f3140;"></div>
<div class="a" style="left:210px;top:614px;width:1070px;height:1px;background:#4b4d68;"></div>
<div class="a" style="left:654px;top:614px;width:1px;height:22px;background:#1b1c24;"></div>
<div class="a" style="left:979px;top:614px;width:1px;height:22px;background:#1b1c24;"></div>
<div class="ui" style="left:287px;top:618px;font-size:12px;color:#b07ee8;letter-spacing:.4px">exports<span style="color:#8d90a3;padding:0 9px 0 10px">›</span>module<span style="color:#8d90a3;padding:0 9px 0 10px">›</span>rules<span style="color:#8d90a3;padding:0 9px 0 10px">›</span>use</div>
<div class="clip" style="left:655px;top:614px;width:325px;height:22px"><div class="ui" style="left:86px;top:4px;font-size:12px;color:#b07ee8;letter-spacing:.4px">&lt;anonymous&gt;()<span style="color:#8d90a3;padding:0 9px 0 10px">›</span>__webpack_modules__</div></div>
<div class="a" style="left:210px;top:29px;width:146px;height:27px;background:#1f2029;"></div>
<div class="a" style="left:210px;top:54px;width:146px;height:2px;background:#6a6e7f;"></div>
<svg class="a" style="left:218px;top:34px" width="17" height="16" viewBox="0 0 17 16"><path d="M7 1h6v7H3V5z" fill="#70738a"/><path d="M7 1v4H3z" fill="#8f92a6"/><rect x="1" y="9" width="15" height="7" fill="#aab55f"/><text x="2" y="15.2" font-family="Liberation Sans" font-weight="bold" font-size="6.5" fill="#3a3e1c">JS</text></svg>
<div class="ui" style="left:238px;top:34px;font-size:12px;color:#ee3f47">webpack.config.js</div>
<svg class="a" style="left:339px;top:38px" width="9" height="9" viewBox="0 0 9 9"><path d="M1 1l7 7M8 1l-7 7" stroke="#37964c" stroke-width="1.1" fill="none"/></svg>
<svg class="a" style="left:640px;top:35px" width="4" height="14" viewBox="0 0 4 14"><circle cx="2" cy="2" r="1.3" fill="#9da0b3"/><circle cx="2" cy="7" r="1.3" fill="#9da0b3"/><circle cx="2" cy="12" r="1.3" fill="#9da0b3"/></svg>
<div class="a" style="left:655px;top:29px;width:88px;height:27px;background:#38362f;"></div>
<div class="a" style="left:655px;top:54px;width:88px;height:2px;background:#6a6e7f;"></div>
<svg class="a" style="left:663px;top:34px" width="17" height="16" viewBox="0 0 17 16"><path d="M7 1h6v7H3V5z" fill="#70738a"/><path d="M7 1v4H3z" fill="#8f92a6"/><rect x="1" y="9" width="15" height="7" fill="#aab55f"/><text x="2" y="15.2" font-family="Liberation Sans" font-weight="bold" font-size="6.5" fill="#3a3e1c">JS</text></svg>
<div class="ui" style="left:683px;top:34px;font-size:12px;color:#ee3f47">main.js</div>
<svg class="a" style="left:726px;top:38px" width="9" height="9" viewBox="0 0 9 9"><path d="M1 1l7 7M8 1l-7 7" stroke="#37964c" stroke-width="1.1" fill="none"/></svg>
<svg class="a" style="left:965px;top:35px" width="4" height="14" viewBox="0 0 4 14"><circle cx="2" cy="2" r="1.3" fill="#9da0b3"/><circle cx="2" cy="7" r="1.3" fill="#9da0b3"/><circle cx="2" cy="12" r="1.3" fill="#9da0b3"/></svg>
<div class="a" style="left:980px;top:29px;width:108px;height:27px;background:#38362f;"></div>
<div class="a" style="left:980px;top:54px;width:108px;height:2px;background:#6a6e7f;"></div>
<svg class="a" style="left:988px;top:34px" width="17" height="16" viewBox="0 0 17 16"><path d="M7 1h6v7H3V5z" fill="#70738a"/><path d="M7 1v4H3z" fill="#8f92a6"/><rect x="1" y="9" width="15" height="7" fill="#2fae55"/><text x="2" y="15.2" font-family="Liberation Sans" font-weight="bold" font-size="6.5" fill="#0c3a1a">H</text></svg>
<div class="ui" style="left:1008px;top:34px;font-size:12px;color:#ee3f47">demo.html</div>
<svg class="a" style="left:1072px;top:38px" width="9" height="9" viewBox="0 0 9 9"><path d="M1 1l7 7M8 1l-7 7" stroke="#37964c" stroke-width="1.1" fill="none"/></svg>
<svg class="a" style="left:1265px;top:35px" width="4" height="14" viewBox="0 0 4 14"><circle cx="2" cy="2" r="1.3" fill="#9da0b3"/><circle cx="2" cy="7" r="1.3" fill="#9da0b3"/><circle cx="2" cy="12" r="1.3" fill="#9da0b3"/></svg>
<div class="a" style="left:1280px;top:29px;width:166px;height:27px;background:#1f2029;"></div>
<div class="a" style="left:1280px;top:54px;width:166px;height:2px;background:#6a6e7f;"></div>
<svg class="a" style="left:1289px;top:35px" width="15" height="15" viewBox="0 0 15 15"><circle cx="7" cy="7" r="6" fill="#7e8196"/><path d="M3 4c2 0 3 1 3 3s-2 2-2 4M8 2c0 2 3 2 3 4s-2 2-1 5" stroke="#1f2029" stroke-width="1.300" fill="none"/><path d="M9 9l5.500 2-2.300.900L14 14l-1 1-1.800-2.100L10.500 15z" fill="#c9cad3" stroke="#1f2029" stroke-width=".6"/></svg>
<div class="ui" style="left:1308px;top:34px;font-size:12px;color:#b8bac4">Preview of demo.html</div>
<svg class="a" style="left:1429px;top:38px" width="9" height="9" viewBox="0 0 9 9"><path d="M1 1l7 7M8 1l-7 7" stroke="#37964c" stroke-width="1.1" fill="none"/></svg>
<svg class="a" style="left:1565px;top:35px" width="4" height="14" viewBox="0 0 4 14"><circle cx="2" cy="2" r="1.3" fill="#9da0b3"/><circle cx="2" cy="7" r="1.3" fill="#9da0b3"/><circle cx="2" cy="12" r="1.3" fill="#9da0b3"/></svg>
<div class="a" style="left:1279px;top:29px;width:1px;height:28px;background:#1b1c24;"></div>
<div class="a" style="left:1280px;top:56px;width:300px;height:580px;background:#ffffff;"></div>
<div class="a" style="left:1288px;top:66px;font-family:'Liberation Serif',serif;font-size:16px;line-height:20px;color:#000;white-space:nowrap"><span class="k" style="width:16px;">打</span><span class="k" style="width:16px;">包</span> css <span class="k" style="width:16px;">样</span><span class="k" style="width:16px;">式</span></div>
<div class="a" style="left:1288px;top:86px;width:200px;height:300px;background:#4bffff;"></div>
<div class="a" style="left:1288px;top:88px;font-family:'Liberation Serif',serif;font-size:16px;line-height:20px;color:#7410e0;white-space:nowrap">demoBox<span class="k" style="width:16px;">的</span><span class="k" style="width:16px;">样</span><span class="k" style="width:16px;">式</span></div>
<div class="a" style="left:1580px;top:29px;width:20px;height:828px;background:#2f3140;"></div>
<div class="a" style="left:1579px;top:29px;width:1px;height:828px;background:#1b1c24;"></div>
<svg class="a" style="left:1584px;top:38px" width="12" height="13" viewBox="0 0 12 13"><ellipse cx="6" cy="2.500" rx="5" ry="2" fill="#8d90a3"/><path d="M1 4.500c0 1 2 2 5 2s5-1 5-2v1.500c0 1-2 2-5 2s-5-1-5-2zM1 7.500c0 1 2 2 5 2s5-1 5-2V9c0 1-2 2-5 2s-5-1-5-2zM1 10.500c0 .8 2 1.800 5 1.800s5-1 5-1.800" fill="#8d90a3"/></svg>
<div class="ui" style="left:1573.0px;top:64.0px;width:34px;height:14px;line-height:14px;font-size:11.5px;color:#9a9db0;transform:rotate(90deg);text-align:center"><span class="k" style="width:11.5px;">数</span><span class="k" style="width:11.5px;">据</span><span class="k" style="width:11.5px;">库</span></div>
<div class="a" style="left:1583px;top:108px;width:13px;height:13px;border-radius:3px;background:#35c98b"></div>
<svg class="a" style="left:1585px;top:111px" width="9" height="8" viewBox="0 0 9 8"><path d="M1 1l3 2.500L1 6" fill="none" stroke="#fff" stroke-width="1.300"/><rect x="5" y="5.500" width="1.300" height="1.300" fill="#fff"/><rect x="7" y="5.500" width="1.300" height="1.300" fill="#fff"/></svg>
<div class="ui" style="left:1571.0px;top:137.0px;width:38px;height:14px;line-height:14px;font-size:11.5px;color:#9a9db0;transform:rotate(90deg);text-align:center">Codota</div>
<svg class="a" style="left:1584px;top:186px" width="12" height="12" viewBox="0 0 12 12"><circle cx="6" cy="6" r="5" fill="none" stroke="#7e8196" stroke-width="1.200"/><path d="M3 3.500c1.500 0 2 1 2 2.500S3.500 7.500 4 9.500M7 1.500c0 1.500 2 1.500 2 3S7.500 6 8 9" stroke="#7e8196" stroke-width="1.100" fill="none"/></svg>
<div class="ui" style="left:1561.0px;top:224.0px;width:58px;height:14px;line-height:14px;font-size:11.5px;color:#9a9db0;transform:rotate(90deg);text-align:center">RestfulTool</div>
<div class="a" style="left:21px;top:637px;width:1559px;height:26px;background:#2f3140;"></div>
<div class="a" style="left:21px;top:663px;width:1559px;height:194px;background:#1f2029;"></div>
<div class="ui" style="left:27px;top:642px;font-size:12.500px;color:#a9acbe"><span class="k" style="width:12.5px;">终</span><span class="k" style="width:12.5px;">端</span>:</div>
<div class="a" style="left:64px;top:637px;width:64px;height:26px;background:#272934;"></div>
<div class="a" style="left:64px;top:661.5px;width:64px;height:2px;background:#6a6e7f;"></div>
<div class="ui" style="left:76px;top:642px;font-size:12.500px;color:#c9cad3"><span class="k" style="width:12.5px;">本</span><span class="k" style="width:12.5px;">地</span></div>
<svg class="a" style="left:108px;top:646px" width="9" height="9" viewBox="0 0 9 9"><path d="M1 1l7 7M8 1l-7 7" stroke="#37964c" stroke-width="1.1" fill="none"/></svg>
<svg class="a" style="left:138px;top:645px" width="10" height="10" viewBox="0 0 10 10"><path d="M5 0v10M0 5h10" stroke="#8d90a3" stroke-width="1.300"/></svg>
<svg class="a" style="left:162px;top:647px" width="12" height="7" viewBox="0 0 12 7"><path d="M1 1l5 4.500L11 1" fill="none" stroke="#8d90a3" stroke-width="1.400"/></svg>
<svg class="a" style="left:1533px;top:643px" width="14" height="14" viewBox="-7 -7 14 14"><rect x="-1.700" y="-6.600" width="3.400" height="4" rx=".5" fill="#8d90a3" transform="rotate(0)"/><rect x="-1.700" y="-6.600" width="3.400" height="4" rx=".5" fill="#8d90a3" transform="rotate(60)"/><rect x="-1.700" y="-6.600" width="3.400" height="4" rx=".5" fill="#8d90a3" transform="rotate(120)"/><rect x="-1.700" y="-6.600" width="3.400" height="4" rx=".5" fill="#8d90a3" transform="rotate(180)"/><rect x="-1.700" y="-6.600" width="3.400" height="4" rx=".5" fill="#8d90a3" transform="rotate(240)"/><rect x="-1.700" y="-6.600" width="3.400" height="4" rx=".5" fill="#8d90a3" transform="rotate(300)"/><circle r="4.700" fill="#8d90a3"/><circle r="2.100" fill="#2f3140"/></svg>
<div class="a" style="left:1560px;top:649px;width:12px;height:1.5px;background:#8d90a3;"></div>
<div class="term" style="left:25px;top:665.7px"><span style="color:#f4f4ef;">modules by path </span><span style="color:#f4f4ef;font-weight:bold;-webkit-text-stroke:0;">./src/demo/</span><span style="color:#f4f4ef;"> 1.82 KiB</span></div>
<div class="term" style="left:25px;top:692.7px"><span style="color:#f4f4ef;">  </span><span style="color:#f4f4ef;font-weight:bold;-webkit-text-stroke:0;">./src/demo/js/index.js</span><span style="color:#f4f4ef;"> 141 bytes </span><span style="color:#ecf674;font-weight:bold;-webkit-text-stroke:0;">[built]</span><span style="color:#f4f4ef;"> </span><span style="color:#ecf674;font-weight:bold;-webkit-text-stroke:0;">[code generated]</span></div>
<div class="term" style="left:25px;top:719.7px"><span style="color:#f4f4ef;">  </span><span style="color:#f4f4ef;font-weight:bold;-webkit-text-stroke:0;">./src/demo/css/demo.css</span><span style="color:#f4f4ef;"> 1.16 KiB </span><span style="color:#ecf674;font-weight:bold;-webkit-text-stroke:0;">[built]</span><span style="color:#f4f4ef;"> </span><span style="color:#ecf674;font-weight:bold;-webkit-text-stroke:0;">[code generated]</span></div>
<div class="term" style="left:25px;top:746.7px"><span style="color:#f4f4ef;">  ./node_modules/css-loader/dist/cjs.js!</span><span style="color:#f4f4ef;font-weight:bold;-webkit-text-stroke:0;">./src/demo/css/demo.css</span><span style="color:#f4f4ef;"> 538 bytes </span><span style="color:#ecf674;font-weight:bold;-webkit-text-stroke:0;">[built]</span><span style="color:#f4f4ef;"> </span><span style="color:#ecf674;font-weight:bold;-webkit-text-stroke:0;">[code generated]</span></div>
<div class="term" style="left:25px;top:773.7px"><span style="color:#f4f4ef;">webpack 5.68.0 compiled </span><span style="color:#4ef76c;font-weight:bold;-webkit-text-stroke:0;">successfully</span><span style="color:#f4f4ef;"> in 630 ms</span></div>
<svg class="a" style="left:0;top:0" width="60" height="900" viewBox="0 0 60 900"><path d="M45 812.300H35.500a6 6 0 0 0-6 6V825" fill="none" stroke="#a55cf0" stroke-width="2.300"/><path d="M29.500 828.500V834.500a6 6 0 0 0 6 6H41" fill="none" stroke="#a55cf0" stroke-width="2.300"/><path d="M37 835.700l5 4.800-5 4.800" fill="none" stroke="#a55cf0" stroke-width="2.300"/></svg>
<svg class="a" style="left:54px;top:806px" width="18" height="14" viewBox="0 0 18 14"><path d="M1.500 12.500V2h4.500l1.500 2h6v2.500M1.500 12.500l2.500-6h13l-2.500 6z" fill="none" stroke="#9f8fcf" stroke-width="1.500"/></svg>
<div class="term" style="left:85px;top:800.700px;color:#7fdcf3;text-decoration:underline;text-decoration-thickness:1.200px;text-underline-offset:3.500px">/Volumes/share/workspace/front/vue/vue3/eduwork/frontBase/webpack</div>
<div class="a" style="left:55px;top:826px;width:11px;height:27px;border:1.500px solid #f4f4ef"></div>
<svg class="a" style="left:1223px;top:805px" width="12" height="17" viewBox="0 0 12 17"><path d="M3 3v11M3 10c5 0 6-2 6-5" fill="none" stroke="#ecf674" stroke-width="1.800"/><circle cx="3" cy="3" r="1.800" fill="#ecf674"/><circle cx="9" cy="4" r="1.800" fill="#ecf674"/><circle cx="3" cy="14" r="1.800" fill="#ecf674"/></svg>
<div class="term" style="left:1245px;top:800.700px;color:#ecf674">master</div>
<div class="a" style="left:1315px;top:807px;width:14px;height:14px;border-radius:7px;background:#ecf674;color:#1f2029;font:bold 12px/14px 'Liberation Sans',sans-serif;text-align:center">+</div>
<div class="a" style="left:1345px;top:807px;width:14px;height:14px;border-radius:7px;background:#ecf674;color:#1f2029;font:bold 12px/14px 'Liberation Sans',sans-serif;text-align:center">!</div>
<div class="a" style="left:1375px;top:807px;width:14px;height:14px;border-radius:7px;background:#ecf674;color:#1f2029;font:bold 12px/14px 'Liberation Sans',sans-serif;text-align:center">?</div>
<div class="ui" style="left:1404px;top:805px;font-size:15px;font-weight:bold;color:#ecf674;letter-spacing:-.5px">git</div>
<div class="term" style="left:1435px;top:800.700px;color:#7fdcf3">22:45:07</div>
<svg class="a" style="left:1524px;top:807px" width="15" height="15" viewBox="0 0 15 15"><circle cx="7.500" cy="7.500" r="5.800" fill="none" stroke="#7fdcf3" stroke-width="2"/><path d="M7.500 4.500v3.500H5" fill="none" stroke="#7fdcf3" stroke-width="1.500"/></svg>
<div class="a" style="left:1568px;top:819px;width:8px;height:34px;border-radius:4px;background:#2f3140"></div>
<div class="a" style="left:0px;top:857px;width:1600px;height:23px;background:#2f3140;"></div>
<div class="a" style="left:0px;top:856px;width:1600px;height:1px;background:#1b1c24;"></div>
<svg class="a" style="left:32px;top:862px" width="9" height="12" viewBox="0 0 9 12"><path d="M2 2v9M2 8c4 0 5-1.500 5-4" fill="none" stroke="#7e8196" stroke-width="1.400"/><circle cx="2" cy="2" r="1.400" fill="#7e8196"/><circle cx="7" cy="3" r="1.400" fill="#7e8196"/></svg>
<div class="ui" style="left:48px;top:860px;font-size:11.5px;color:#9a9db0;">Git</div>
<svg class="a" style="left:84px;top:863px" width="10" height="9" viewBox="0 0 10 9"><path d="M3 1h7M3 4.500h7M3 8h7" stroke="#7e8196" stroke-width="1.400"/><rect x="0" y=".3" width="1.500" height="1.500" fill="#7e8196"/><rect x="0" y="3.800" width="1.500" height="1.500" fill="#7e8196"/><rect x="0" y="7.300" width="1.500" height="1.500" fill="#7e8196"/></svg>
<div class="ui" style="left:99px;top:860px;font-size:11.5px;color:#9a9db0;">TODO</div>
<div class="a" style="left:153px;top:863px;width:10px;height:10px;border-radius:5px;background:#7e8196;color:#2f3140;font:bold 9px/10px 'Liberation Sans';text-align:center">!</div>
<div class="ui" style="left:169px;top:860px;font-size:11px;color:#9a9db0;"><span class="k" style="width:11px;">问</span><span class="k" style="width:11px;">题</span></div>
<svg class="a" style="left:209px;top:862px" width="13" height="12" viewBox="0 0 13 12"><path d="M1 4l4-3 2 1.500L3 6z" fill="#7e8196"/><path d="M5 4l6.500 6-1.500 1.500L3.800 5.200z" fill="#7e8196"/></svg>
<div class="ui" style="left:226px;top:860px;font-size:11px;color:#9a9db0;"><span class="k" style="width:11px;">构</span><span class="k" style="width:11px;">建</span></div>
<svg class="a" style="left:267px;top:863px" width="12" height="11" viewBox="0 0 12 11"><path d="M6 .5l5.500 10H.5z" fill="#7e8196"/><rect x="5.400" y="4" width="1.200" height="3.500" fill="#2f3140"/><rect x="5.400" y="8.200" width="1.200" height="1.200" fill="#2f3140"/></svg>
<div class="ui" style="left:284px;top:860px;font-size:11px;color:#9a9db0;"><span class="k" style="width:11px;">自</span><span class="k" style="width:11px;">动</span><span class="k" style="width:11px;">构</span><span class="k" style="width:11px;">建</span></div>
<svg class="a" style="left:348px;top:862px" width="13" height="13" viewBox="0 0 13 13"><circle cx="5.500" cy="5.500" r="4.500" fill="none" stroke="#7e8196" stroke-width="1.300"/><path d="M5.500 2.500v3h-2.500" fill="none" stroke="#7e8196" stroke-width="1.100"/><path d="M7.500 6.500l5 3-5 3z" fill="#7e8196" stroke="#2f3140" stroke-width=".8"/></svg>
<div class="ui" style="left:366px;top:860px;font-size:11.5px;color:#9a9db0;">Profiler</div>
<div class="a" style="left:414px;top:857px;width:56px;height:23px;background:#1f2029;"></div>
<svg class="a" style="left:424px;top:863px" width="11" height="10" viewBox="0 0 11 10"><rect x="0" y="0" width="11" height="10" fill="#9a9db0"/><path d="M2 2.500l2.500 2L2 6.500" fill="none" stroke="#1f2029" stroke-width="1.200"/><rect x="5.500" y="6.500" width="3" height="1.200" fill="#1f2029"/></svg>
<div class="ui" style="left:440px;top:860px;font-size:11px;color:#f2f2f5;font-weight:bold;"><span class="k" style="width:11px;">终</span><span class="k" style="width:11px;">端</span></div>
<svg class="a" style="left:481px;top:862px" width="13" height="12" viewBox="0 0 13 12"><ellipse cx="6" cy="2.200" rx="5" ry="1.800" fill="#7e8196"/><path d="M1 4c0 1 2 1.800 5 1.800s5-.800 5-1.800v1.500c0 1-2 1.800-5 1.800S1 6.500 1 5.500zM1 7c0 1 2 1.800 5 1.800 1 0 2-.100 2.500-.300v1.500c-.500.200-1.500.300-2.500.300-3 0-5-.800-5-1.800z" fill="#7e8196"/><path d="M9 8.500l1.500 1.500 2.500-3" fill="none" stroke="#7e8196" stroke-width="1.200"/></svg>
<div class="ui" style="left:498px;top:860px;font-size:11px;color:#9a9db0;"><span class="k" style="width:11px;">数</span><span class="k" style="width:11px;">据</span><span class="k" style="width:11px;">库</span><span class="k" style="width:11px;">更</span><span class="k" style="width:11px;">改</span></div>
<div class="a" style="left:1397px;top:862px;width:13px;height:13px;border-radius:7px 7px 2px 7px;background:#ecf674;color:#1f2029;font:bold 9.500px/13px 'Liberation Sans';text-align:center">2</div>
<div class="ui" style="left:1415px;top:860px;font-size:11px;color:#9a9db0;"><span class="k" style="width:11px;">事</span><span class="k" style="width:11px;">件</span><span class="k" style="width:11px;">日</span><span class="k" style="width:11px;">志</span></div>
<svg class="a" style="left:1480px;top:860px" width="17" height="16" viewBox="0 0 17 16"><ellipse cx="8" cy="9.500" rx="6" ry="5" fill="#17171c"/><circle cx="5.500" cy="6" r="3.300" fill="#17171c"/><path d="M3 3.500c3-1.500 7-1 11 2l-1.500 1c-3-2-6-2.500-9-1.500z" fill="#d52b2b"/><path d="M12.500 5l3.500-1.500-1 3z" fill="#d52b2b"/></svg>
<div class="ui" style="left:1501px;top:860px;font-size:11.5px;color:#9a9db0;">MyBatis Log</div>
<div class="a" style="left:0px;top:880px;width:1600px;height:20px;background:#2f3140;"></div>
<div class="a" style="left:0px;top:879px;width:1600px;height:1px;background:#1b1c24;"></div>
<svg class="a" style="left:6px;top:884px" width="12" height="12" viewBox="0 0 12 12"><rect x=".6" y="2.600" width="8.800" height="8.800" fill="none" stroke="#7e8196" stroke-width="1.100"/><path d="M3 .6h8.400V9" fill="none" stroke="#7e8196" stroke-width="1.100"/></svg>
<div class="clip" style="left:30px;top:880px;width:984.500px;height:20px"><div class="ui" style="left:1px;top:3px;font-size:11.300px;line-height:15px;color:#9a9db0;letter-spacing:.12px">Webpack: <span class="k" style="width:11.05px;">无</span><span class="k" style="width:11.05px;">法</span><span class="k" style="width:11.05px;">分</span><span class="k" style="width:11.05px;">析</span> webpack.config.js: <span class="k" style="width:11.05px;">编</span><span class="k" style="width:11.05px;">码</span><span class="k" style="width:11.05px;">辅</span><span class="k" style="width:11.05px;">助</span><span class="k" style="width:11.05px;">将</span><span class="k" style="width:11.05px;">忽</span><span class="k" style="width:11.05px;">略</span><span class="k" style="width:11.05px;">此</span><span class="k" style="width:11.05px;">文</span><span class="k" style="width:11.05px;">件</span><span class="k" style="width:11.05px;">中</span><span class="k" style="width:11.05px;">的</span><span class="k" style="width:11.05px;">模</span><span class="k" style="width:11.05px;">块</span><span class="k" style="width:11.05px;">解</span><span class="k" style="width:11.05px;">析</span><span class="k" style="width:11.05px;">规</span><span class="k" style="width:11.05px;">则</span><span class="k" style="width:11.05px;">。</span> // <span class="k" style="width:11.05px;">可</span><span class="k" style="width:11.05px;">能</span><span class="k" style="width:11.05px;">的</span><span class="k" style="width:11.05px;">原</span><span class="k" style="width:11.05px;">因</span>: <span class="k" style="width:11.05px;">此</span><span class="k" style="width:11.05px;">文</span><span class="k" style="width:11.05px;">件</span><span class="k" style="width:11.05px;">不</span><span class="k" style="width:11.05px;">是</span><span class="k" style="width:11.05px;">有</span><span class="k" style="width:11.05px;">效</span><span class="k" style="width:11.05px;">的</span> webpack <span class="k" style="width:11.05px;">配</span><span class="k" style="width:11.05px;">置</span><span class="k" style="width:11.05px;">文</span><span class="k" style="width:11.05px;">件</span><span class="k" style="width:11.05px;">，</span><span class="k" style="width:11.05px;">或</span><span class="k" style="width:11.05px;">者</span> IDE <span class="k" style="width:11.05px;">目</span><span class="k" style="width:11.05px;">前</span><span class="k" style="width:11.05px;">不</span><span class="k" style="width:11.05px;">支</span><span class="k" style="width:11.05px;">持</span><span class="k" style="width:11.05px;">其</span><span class="k" style="width:11.05px;">格</span><span class="k" style="width:11.05px;">式</span><span class="k" style="width:11.05px;">。</span> // <span class="k" style="width:11.05px;">错</span><span class="k" style="width:11.05px;">误</span><span class="k" style="width:11.05px;">详</span><span class="k" style="width:11.05px;">细</span><span class="k" style="width:11.05px;">信</span><span class="k" style="width:11.05px;">息</span>:... (5 <span class="k" style="width:11.05px;">分</span><span class="k" style="width:11.05px;">钟</span> <span class="k" style="width:11.05px;">之</span><span class="k" style="width:11.05px;">前</span>)</div></div>
<div class="ui" style="left:1049px;top:882.500px;font-size:11.300px;line-height:15px;color:#9a9db0;letter-spacing:.2px">TypeScript 4.4.4</div>
<svg class="a" style="left:1146px;top:884px" width="12" height="13" viewBox="0 0 12 13"><path d="M6 .8l5 2.900v5.600L6 12.200 1 9.300V3.700z" fill="none" stroke="#8a4fe8" stroke-width="1.300"/><path d="M4 4.500l4.500 2L4 8.500z" fill="none" stroke="#8a4fe8" stroke-width="1.100"/></svg>
<div class="ui" style="left:1162px;top:881px;font-size:13.500px;line-height:16px;color:#c9cad3;letter-spacing:.5px">tabnine</div>
<div class="ui" style="left:1226px;top:882.500px;font-size:11.300px;line-height:15px;color:#9a9db0;">12:69</div>
<div class="ui" style="left:1267px;top:882.500px;font-size:11.300px;line-height:15px;color:#9a9db0;">LF</div>
<div class="ui" style="left:1291px;top:882.500px;font-size:11.300px;line-height:15px;color:#9a9db0;">UTF-8</div>
<div class="ui" style="left:1336px;top:882.500px;font-size:11.300px;line-height:15px;color:#9a9db0;">4 <span class="k" style="width:11.3px;">个</span><span class="k" style="width:11.3px;">空</span><span class="k" style="width:11.3px;">格</span></div>
<svg class="a" style="left:1392px;top:883px" width="10" height="14" viewBox="0 0 10 14"><path d="M2.500 2v10M2.500 9c4.500 0 5-2 5-5" fill="none" stroke="#7e8196" stroke-width="1.400"/></svg>
<div class="ui" style="left:1408px;top:882.500px;font-size:11.300px;line-height:15px;color:#9a9db0;">master</div>
<svg class="a" style="left:1454px;top:883px" width="12" height="13" viewBox="0 0 12 13"><rect x="3" y="6" width="8" height="6" fill="#7e8196"/><path d="M1 6V3.500a2 2 0 0 1 4 0V6" fill="none" stroke="#7e8196" stroke-width="1.300"/></svg>
<svg class="a" style="left:1476px;top:883px" width="18" height="14" viewBox="0 0 18 14"><path d="M4 10a3 3 0 0 1 0-6 4 4 0 0 1 7.500-1A3.500 3.500 0 0 1 13 10z" fill="#6d7083"/><circle cx="13" cy="10.500" r="2.500" fill="#6d7083" stroke="#2f3140" stroke-width="1"/></svg>
<div class="a" style="left:1502px;top:884px;width:12px;height:12px;border-radius:3px;background:#35c98b"></div>
<svg class="a" style="left:1504px;top:886px" width="9" height="8" viewBox="0 0 9 8"><path d="M1 1l3 2.500L1 6" fill="none" stroke="#fff" stroke-width="1.300"/><rect x="5" y="5.500" width="1.300" height="1.300" fill="#fff"/><rect x="7" y="5.500" width="1.300" height="1.300" fill="#fff"/></svg>
<div class="a" style="left:1520px;top:881px;width:48px;height:18px;background:#4a4b55;"></div>
<div class="a" style="left:1558px;top:881px;width:10px;height:18px;background:#3d3e49;"></div>
<div class="ui" style="left:1529px;top:882.500px;font-size:11.300px;line-height:15px;color:#9a9db0;color:#b4b7c7">538/1024M</div>
<div class="a" style="left:1600px;top:0px;width:320px;height:900px;background:#ffffff;"></div>
<div class="a" style="left:1620px;top:20px;width:20px;height:20px;border-radius:10px;background:#d9001b;color:#fff;font:bold 14px/20px 'Liberation Sans',sans-serif;text-align:center;-webkit-text-stroke:0px #fff">1</div>
<div class="a" style="left:1650px;top:20px;font-size:15px;line-height:19px;color:#111;white-space:nowrap;letter-spacing:.2px"><span class="k" style="width:15.2px;">找</span><span class="k" style="width:15.2px;">到</span> css <span class="k" style="width:15.2px;">文</span><span class="k" style="width:15.2px;">件</span></div>
<div class="a" style="left:1620px;top:58px;width:20px;height:20px;border-radius:10px;background:#d9001b;color:#fff;font:bold 14px/20px 'Liberation Sans',sans-serif;text-align:center;-webkit-text-stroke:0px #fff">2</div>
<div class="a" style="left:1650px;top:58px;font-size:15px;line-height:19px;color:#111;white-space:nowrap;letter-spacing:.2px"><span class="k" style="width:15.2px;">把</span> css <span class="k" style="width:15.2px;">文</span><span class="k" style="width:15.2px;">件</span><span class="k" style="width:15.2px;">打</span><span class="k" style="width:15.2px;">包</span><span class="k" style="width:15.2px;">到</span> js <span class="k" style="width:15.2px;">中</span></div>
<div class="a" style="left:1620px;top:96px;width:20px;height:20px;border-radius:10px;background:#d9001b;color:#fff;font:bold 14px/20px 'Liberation Sans',sans-serif;text-align:center;-webkit-text-stroke:0px #fff">3</div>
<div class="a" style="left:1650px;top:96px;font-size:15px;line-height:19px;color:#111;white-space:nowrap;letter-spacing:.2px">Html <span class="k" style="width:15.2px;">中</span><span class="k" style="width:15.2px;">引</span><span class="k" style="width:15.2px;">入</span><span class="k" style="width:15.2px;">带</span><span class="k" style="width:15.2px;">有</span> css <span class="k" style="width:15.2px;">样</span><span class="k" style="width:15.2px;">式</span><span class="k" style="width:15.2px;">的</span> js <span class="k" style="width:15.2px;">文</span><span class="k" style="width:15.2px;">件</span></div>
<div class="a" style="left:1620px;top:134px;width:20px;height:20px;border-radius:10px;background:#d9001b;color:#fff;font:bold 14px/20px 'Liberation Sans',sans-serif;text-align:center;-webkit-text-stroke:0px #fff">4</div>
<div class="a" style="left:1650px;top:134px;font-size:15px;line-height:19px;color:#111;white-space:nowrap;letter-spacing:.2px"><span class="k" style="width:15.2px;">提</span><span class="k" style="width:15.2px;">前</span><span class="k" style="width:15.2px;">指</span><span class="k" style="width:15.2px;">定</span><span class="k" style="width:15.2px;">的</span><span class="k" style="width:15.2px;">（</span><span class="k" style="width:15.2px;">这</span><span class="k" style="width:15.2px;">个</span><span class="k" style="width:15.2px;">是</span><span class="k" style="width:15.2px;">提</span><span class="k" style="width:15.2px;">前</span><span class="k" style="width:15.2px;">写</span><span class="k" style="width:15.2px;">的</span><span class="k" style="width:15.2px;">，</span><span class="k" style="width:15.2px;">不</span><span class="k" style="width:15.2px;">是</span><br><span class="k" style="width:15.2px;">自</span><span class="k" style="width:15.2px;">动</span><span class="k" style="width:15.2px;">生</span><span class="k" style="width:15.2px;">成</span><span class="k" style="width:15.2px;">的</span><span class="k" style="width:15.2px;">）</span></div>
<div class="a" style="left:1082.200px;top:185.300px;width:202.800px;height:35px;border:3px solid #d9001b;border-radius:1.500px"></div>
<div class="a" style="left:1048px;top:267.500px;width:232.500px;height:35px;border:3px solid #d9001b;border-radius:1.500px"></div>
<div class="a" style="left:461px;top:323px;width:30px;height:30px;border-radius:15px;background:#d9001b;color:#fff;font:normal 24px/30px 'Liberation Sans',sans-serif;text-align:center;-webkit-text-stroke:0.35px #fff">1</div>
<div class="a" style="left:574px;top:454px;width:30px;height:30px;border-radius:15px;background:#d9001b;color:#fff;font:normal 24px/30px 'Liberation Sans',sans-serif;text-align:center;-webkit-text-stroke:0.35px #fff">2</div>
<div class="a" style="left:1262px;top:225px;width:30px;height:30px;border-radius:15px;background:#d9001b;color:#fff;font:normal 24px/30px 'Liberation Sans',sans-serif;text-align:center;-webkit-text-stroke:0.35px #fff">3</div>
<div class="a" style="left:1139px;top:303px;width:30px;height:30px;border-radius:15px;background:#d9001b;color:#fff;font:normal 24px/30px 'Liberation Sans',sans-serif;text-align:center;-webkit-text-stroke:0.35px #fff">4</div>
<svg class="a" style="left:0;top:0" width="1920" height="900" viewBox="0 0 1920 900"><path d="M625.4 442.1 L626.2 436.2 L627.0 430.3 L627.8 424.4 L628.5 418.6 L629.3 412.7 L630.0 406.9 L630.8 401.1 L631.5 395.3 L632.3 389.6 L633.0 383.9 L633.8 378.2 L634.6 372.5 L635.4 366.8 L636.2 361.2 L637.1 355.6 L638.0 350.1 L638.9 344.6 L639.9 339.1 L640.9 333.6 L641.9 328.2 L643.0 322.9 L644.2 317.5 L645.4 312.3 L646.7 307.0 L648.0 301.8 L649.4 296.7 L650.9 291.6 L652.5 286.5 L654.1 281.5 L655.8 276.5 L657.6 271.6 L659.5 266.8 L661.5 262.0 L663.5 257.3 L665.7 252.6 L668.0 247.9 L670.4 243.4 L672.8 238.9 L675.4 234.4 L678.2 230.0 L681.0 225.7 L684.0 221.5 L687.0 217.3 L690.3 213.2 L693.6 209.1 L697.1 205.1 L700.7 201.2 L704.5 197.3 L705.2 196.6 L700.6 189.9 L698.9 191.7 L695.0 195.7 L691.2 199.9 L687.6 204.0 L684.2 208.3 L680.9 212.6 L677.7 217.0 L674.6 221.5 L671.7 226.0 L669.0 230.6 L666.3 235.2 L663.8 239.9 L661.4 244.7 L659.1 249.5 L656.9 254.3 L654.8 259.2 L652.8 264.2 L650.9 269.2 L649.1 274.2 L647.4 279.3 L645.8 284.4 L644.3 289.6 L642.8 294.8 L641.4 300.1 L640.1 305.4 L638.9 310.7 L637.7 316.1 L636.6 321.5 L635.5 327.0 L634.5 332.5 L633.5 338.0 L632.6 343.5 L631.7 349.1 L630.9 354.7 L630.1 360.3 L629.3 366.0 L628.5 371.7 L627.8 377.4 L627.0 383.1 L626.3 388.8 L625.6 394.6 L624.9 400.4 L624.3 406.2 L623.6 412.0 L622.9 417.9 L622.2 423.7 L621.5 429.6 L620.7 435.4 L620.0 441.3Z" fill="#f5820b"/><path d="M697.8 179.8 L728.9 187.2 L704.4 207.8Z" fill="#f5820b"/><path d="M473.5 473.3 L486.9 480.9 L500.6 487.9 L514.5 494.6 L528.6 500.7 L542.9 506.4 L557.4 511.7 L572.1 516.5 L587.0 520.9 L602.0 524.8 L617.2 528.3 L632.6 531.3 L648.2 534.0 L663.9 536.1 L679.8 537.9 L695.8 539.2 L711.9 540.1 L728.2 540.6 L744.7 540.6 L761.3 540.3 L778.0 539.5 L794.8 538.3 L811.7 536.7 L828.8 534.7 L845.9 532.2 L863.2 529.4 L880.5 526.2 L898.0 522.5 L915.5 518.5 L933.2 514.1 L950.9 509.3 L968.6 504.0 L986.5 498.4 L1004.4 492.5 L1022.4 486.1 L1040.4 479.3 L1058.5 472.2 L1076.6 464.7 L1094.8 456.8 L1113.0 448.5 L1131.3 439.9 L1149.5 430.9 L1167.8 421.5 L1186.2 411.8 L1204.5 401.7 L1222.8 391.2 L1241.2 380.4 L1259.5 369.3 L1277.9 357.7 L1278.7 357.2 L1276.5 350.9 L1274.3 352.3 L1256.1 363.8 L1237.9 374.9 L1219.6 385.7 L1201.4 396.2 L1183.2 406.3 L1164.9 416.0 L1146.7 425.3 L1128.6 434.3 L1110.4 443.0 L1092.3 451.2 L1074.3 459.1 L1056.3 466.6 L1038.3 473.8 L1020.4 480.5 L1002.5 486.9 L984.7 492.9 L967.0 498.5 L949.3 503.7 L931.7 508.6 L914.2 513.0 L896.8 517.0 L879.5 520.7 L862.2 524.0 L845.1 526.8 L828.1 529.3 L811.1 531.3 L794.3 532.9 L777.6 534.2 L761.1 535.0 L744.6 535.4 L728.3 535.4 L712.1 535.0 L696.1 534.1 L680.2 532.8 L664.5 531.1 L648.9 529.0 L633.5 526.5 L618.3 523.5 L603.2 520.1 L588.3 516.2 L573.5 511.9 L559.0 507.2 L544.6 502.0 L530.4 496.4 L516.4 490.3 L502.7 483.8 L489.1 476.9 L475.7 469.5Z" fill="#f5820b"/><path d="M1268.3 342.8 L1299.8 339.1 L1283.6 366.1Z" fill="#f5820b"/></svg>
</div></body></html>
